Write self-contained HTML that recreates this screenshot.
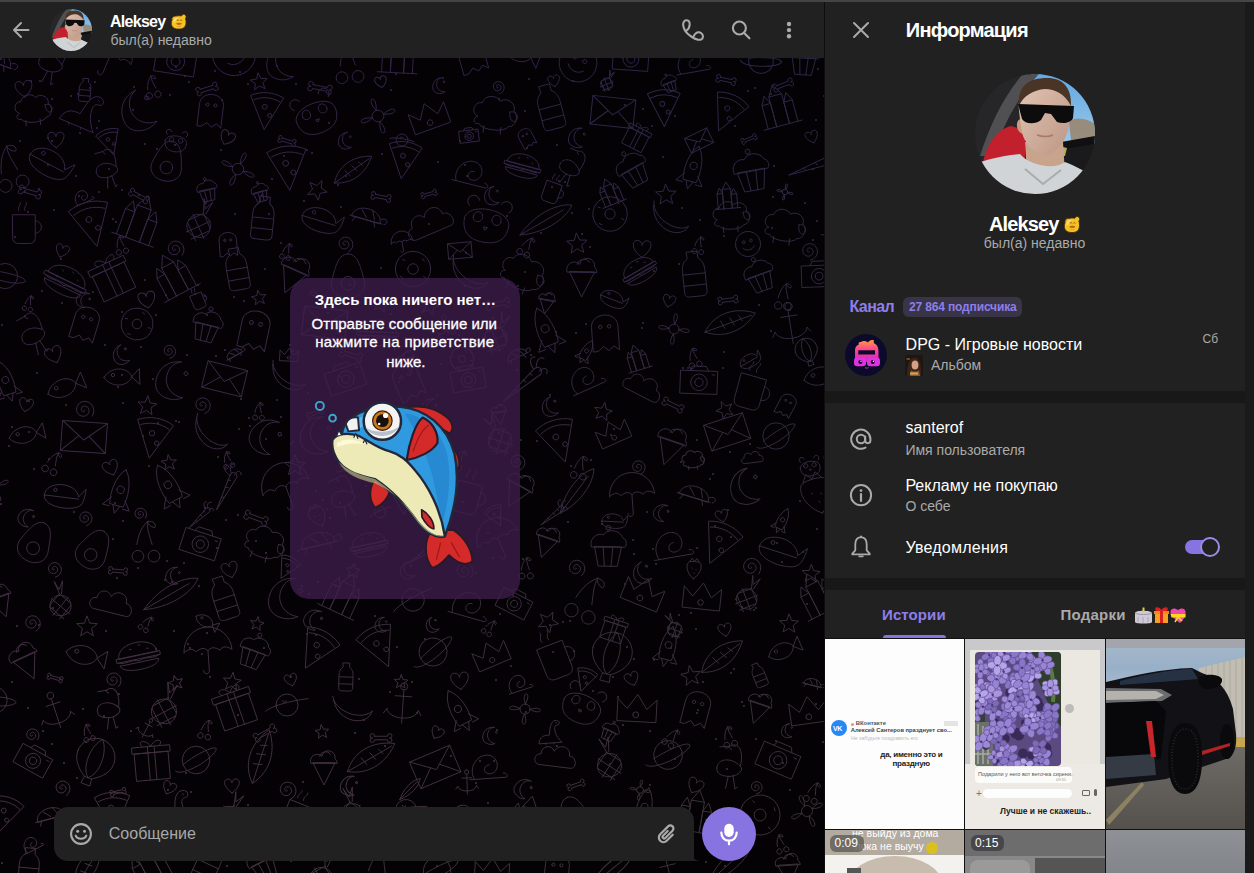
<!DOCTYPE html>
<html><head><meta charset="utf-8">
<style>
*{margin:0;padding:0;box-sizing:border-box}
html,body{width:1254px;height:873px;overflow:hidden;background:#181818;font-family:"Liberation Sans",sans-serif;color:#fff}
.abs{position:absolute}
.t{position:absolute;white-space:nowrap;line-height:1}
#topline{left:0;top:0;width:1254px;height:2px;background:#454545}
#chat{left:0;top:58px;width:824px;height:815px;background:#040205;overflow:hidden}
#chathdr{left:0;top:2px;width:824px;height:56px;background:#212121}
#vline{left:824px;top:2px;width:1px;height:871px;background:#0e0e0e}
#panel{left:825px;top:2px;width:420px;height:871px;background:#212121;overflow:hidden}
#strip{left:1245px;top:2px;width:9px;height:871px;background:#1a1a1a}
.sep{position:absolute;left:825px;width:420px;height:12px;background:#181818}
.grey{color:#aaaaaa}
.purple{color:#8d7eea}
svg{position:absolute;overflow:visible}
</style></head><body>
<svg width="0" height="0" style="position:absolute;left:0;top:0">
<defs>
<clipPath id="avc"><circle cx="60" cy="60" r="60"/></clipPath>
<linearGradient id="sky" x1="0" y1="0" x2="0" y2="1"><stop offset="0" stop-color="#62a8e2"/><stop offset="1" stop-color="#9ac8ea"/></linearGradient>
<linearGradient id="skin" x1="0" y1="0" x2="1" y2="1"><stop offset="0" stop-color="#e2c4b4"/><stop offset="1" stop-color="#bc9684"/></linearGradient>
<symbol id="avatar" viewBox="0 0 120 120">
<g clip-path="url(#avc)">
<rect width="120" height="120" fill="#262628"/>
<path d="M56 0H120V70H85Z" fill="url(#sky)"/>
<path d="M94 48C100 42 112 44 120 50V66H96Z" fill="#9a8468" opacity=".85"/>
<path d="M48 0H64C45 20 28 50 18 82L5 82C15 50 30 20 48 0Z" fill="#505052"/>
<path d="M8 88C12 70 22 55 36 52L50 56L50 92Z" fill="#c2202c"/>
<path d="M86 68L120 62V70L88 76Z" fill="#101012"/>
<path d="M86 76L120 70V105L88 105Z" fill="#1a1a1c"/>
<path d="M84 72L92 74L90 82L84 82Z" fill="#b8a860"/>
<path d="M50 68L88 68L90 100L52 100Z" fill="#c9a48c"/>
<path d="M47 45C40 44 40 58 48 60Z" fill="#c89a80"/>
<path d="M44 36C42 20 52 10 70 10C88 10 96 20 95 40C94 58 90 74 72 81C60 80 52 72 48 62C46 55 45 46 44 36Z" fill="url(#skin)"/>
<path d="M44 32C42 12 54 4 72 4C88 4 97 14 96 32C90 20 80 15 70 15C58 16 48 22 44 32Z" fill="#4a3426"/>
<path d="M43 30L99 32L98 44C96 49 88 50 82 48L76 40L70 39L66 46C60 51 50 50 47 45Z" fill="#0c0c0c"/>
<path d="M62 61C67 63 74 63 78 61" stroke="#a87a68" stroke-width="1.5" fill="none"/>
<path d="M0 120V90C10 86 25 82 45 80C55 92 80 96 90 88C100 92 112 98 120 104V120Z" fill="#d0d4d6"/>
<path d="M50 95L68 110L86 96" stroke="#a8acae" stroke-width="2" fill="none"/>
</g>
</symbol>
<symbol id="emo" viewBox="0 0 16 16">
<path d="M1.8 7C1.2 4.5 3 2.8 5.200 3C7 2.600 9 2.500 10.600 2.800C11 1.200 13.200 .800 14.200 2.100C15.100 3.200 14.800 4.700 14.100 5.500C14.900 7.600 15 10.200 14 12.600C13 15 10.500 15.600 8 15.600C5 15.600 2.700 14.800 1.700 12.600C.900 10.600 1 8.600 1.800 7Z" fill="#f3c226" stroke="#4a2800" stroke-width=".8"/>
<path d="M3 8C3.500 5 6 4 8 4.500C6 5.500 4.500 7 4.500 9.500Z" fill="#fde58a" opacity=".9"/>
<path d="M6.200 7.300C6.800 6.600 7.800 6.700 8 7.400M9.300 7.300C9.900 6.600 10.900 6.700 11.100 7.400" stroke="#8a4a08" stroke-width=".8" fill="none"/>
<path d="M5.500 10.200C6.500 9.200 10 9.200 11 10.200C10.500 12 6 12 5.500 10.200Z" fill="#c0661a"/>
<path d="M6.500 12.800C7.500 13.300 9 13.300 10 12.800" stroke="#d89030" stroke-width=".7" fill="none"/>
</symbol>
</defs></svg>
<div class="abs" id="topline"></div>
<div class="abs" id="chat"><svg style="left:0;top:0" width="824" height="815" viewBox="0 0 824 815"><defs><path id="d_anchor" vector-effect="non-scaling-stroke" d="M0-45A8 8 0 1 0 0-29A8 8 0 1 0 0-45M0-29V45M-18-15H18M-35 15C-30 40 30 40 35 15M-35 15L-42 25M35 15L42 25"/><path id="d_avocado" vector-effect="non-scaling-stroke" d="M0-45C20-45 25-20 32 5C40 30 22 45 0 45C-22 45-40 30-32 5C-25-20-20-45 0-45ZM-14 15A14 14 0 1 0 14 15A14 14 0 1 0-14 15"/><path id="d_balloon" vector-effect="non-scaling-stroke" d="M-40-10A40 40 0 1 1 40-10C40 15 15 30 8 35H-8C-15 30-40 15-40-10ZM-8 35L-10 50H10L8 35M0-50C-20-30-20 20 0 35M0-50C20-30 20 20 0 35"/><path id="d_banana" vector-effect="non-scaling-stroke" d="M-45-20C-35 30 35 40 45 0C30 20-25 15-45-20ZM-45-20L-48-30"/><path id="d_bird" vector-effect="non-scaling-stroke" d="M-30 5C-30-15 0-20 20 0C30 10 10 25-10 22C-25 20-30 15-30 5ZM20 0C25-25 20-45 5-45C-5-45-8-38 0-35M-5-42L-25-40M-5 22L-10 48M5 20L10 48M10 48L15 45"/><path id="d_bone" vector-effect="non-scaling-stroke" d="M-30-8H30A10 10 0 1 1 38 0A10 10 0 1 1 30 8H-30A10 10 0 1 1-38 0A10 10 0 1 1-30-8Z"/><path id="d_bottle" vector-effect="non-scaling-stroke" d="M-12-50H12V-35C25-25 25-15 25 0V40C25 48 20 50 12 50H-12C-20 50-25 48-25 40V0C-25-15-25-25-12-35ZM-25 0H25M-25 25H25"/><path id="d_burger" vector-effect="non-scaling-stroke" d="M-40 0C-40-35 40-35 40 0ZM-45 0H45V8H-45ZM-42 8C-30 15-15 5 0 12C15 5 30 15 42 8M-40 15H40C40 35-40 35-40 15ZM-15-15L-12-14M5-20L8-19M20-10L23-9"/><path id="d_camera" vector-effect="non-scaling-stroke" d="M-40-20H40V30H-40ZM-20-20L-15-30H15L20-20M-18 5A18 18 0 1 0 18 5A18 18 0 1 0-18 5M-9 5A9 9 0 1 0 9 5A9 9 0 1 0-9 5M28-12H34"/><path id="d_carrot" vector-effect="non-scaling-stroke" d="M-45 40L25-20C35-28 45-18 38-8ZM-20 18L-14 22M0 0L6 5M15-12L20-8M30-22C32-40 40-45 48-40M35-15C50-25 55-15 50-8M25-20C15-35 20-48 30-45"/><path id="d_castle" vector-effect="non-scaling-stroke" d="M-35 45V-10H-15V45M-15 45V-25H15V45M15 45V-5H35V45M-35-10L-25-30L-15-10M-15-25L0-50L15-25M15-5L25-25L35-5M-45 45H45"/><path id="d_cherry" vector-effect="non-scaling-stroke" d="M-20 20A14 14 0 1 0-19 20M18 25A14 14 0 1 0 19 25M-18 6C-10-20 0-35 15-45M18 11C15-10 10-30 15-45M15-45C30-45 35-35 30-28C20-30 15-38 15-45"/><path id="d_cloud" vector-effect="non-scaling-stroke" d="M-40 20C-55 20-55-5-38-5C-40-25-15-30-8-15C0-35 30-30 28-8C45-10 50 20 35 20Z"/><path id="d_crown" vector-effect="non-scaling-stroke" d="M-40 25V-20L-20 0L0-30L20 0L40-20V25ZM-8 12A6 6 0 1 0 4 12A6 6 0 1 0-8 12"/><path id="d_cupcake" vector-effect="non-scaling-stroke" d="M-28 0L-20 40H20L28 0ZM-35 0C-40-20-20-30-10-25C0-40 25-35 30-20C42-15 38 0 35 0ZM0-35A5 5 0 1 0 0-45A5 5 0 1 0 0-35M-10 0L-7 40M10 0L7 40"/><path id="d_dino" vector-effect="non-scaling-stroke" d="M-40 40C-35 15-20 10 0 12C5-10 5-30 20-40C35-45 45-35 38-25C30-22 25-25 22-15C20 5 30 25 45 40ZM28-33L30-32M-15 40V45M15 40V45"/><path id="d_donut" vector-effect="non-scaling-stroke" d="M-40 0A40 40 0 1 0 40 0A40 40 0 1 0-40 0M-12 0A12 12 0 1 0 12 0A12 12 0 1 0-12 0M-25-20L-20-18M20-25L24-20M25 15L30 18M-28 18L-22 22"/><path id="d_envelope" vector-effect="non-scaling-stroke" d="M-45-28H45V32H-45ZM-45-28L0 8L45-28M-45 32L-10 0M45 32L10 0"/><path id="d_face" vector-effect="non-scaling-stroke" d="M-45 0A45 45 0 1 0 45 0A45 45 0 1 0-45 0M-18-10A5 5 0 1 0-8-10A5 5 0 1 0-18-10M8-10A5 5 0 1 0 18-10A5 5 0 1 0 8-10M-20 12C-10 25 10 25 20 12"/><path id="d_feather" vector-effect="non-scaling-stroke" d="M-45 45C-30 0 10-40 45-45C40-10 0 30-45 45ZM-45 45L30-30"/><path id="d_feather2" vector-effect="non-scaling-stroke" d="M-40 40C-40 0-10-35 40-42C35-5 10 35-40 40ZM-40 40L35-35M-20 5L-5 15M-5-10L10 0M10-22L22-15"/><path id="d_fish" vector-effect="non-scaling-stroke" d="M-35 0C-20-25 20-25 30 0C20 25-20 25-35 0ZM30 0L48-18V18ZM-18-5A4 4 0 1 0-10-5A4 4 0 1 0-18-5"/><path id="d_flower" vector-effect="non-scaling-stroke" d="M0-12A12 12 0 1 0 0 12A12 12 0 1 0 0-12ZM0-12C-15-45 15-45 0-12M12 0C45-15 45 15 12 0M0 12C15 45-15 45 0 12M-12 0C-45 15-45-15-12 0"/><path id="d_ghost" vector-effect="non-scaling-stroke" d="M-30 45V-10C-30-45 30-45 30-10V45L18 35L6 45L-6 35L-18 45ZM-14-10A4 4 0 1 0-6-10A4 4 0 1 0-14-10M6-10A4 4 0 1 0 14-10A4 4 0 1 0 6-10"/><path id="d_gift" vector-effect="non-scaling-stroke" d="M-40-20H40V45H-40ZM-45-35H45V-20H-45ZM-8-35V45M8-35V45M0-35C-10-55-35-50-20-35M0-35C10-55 35-50 20-35"/><path id="d_heart" vector-effect="non-scaling-stroke" d="M0 35C-45 5-45-35-20-35C-8-35 0-25 0-15C0-25 8-35 20-35C45-35 45 5 0 35Z"/><path id="d_icecream" vector-effect="non-scaling-stroke" d="M-25 0L0 50L25 0ZM-30 0A15 15 0 0 1-5-15A15 15 0 0 1 25-10A14 14 0 0 1 30 0ZM-10-15A14 14 0 0 1 15-20"/><path id="d_moon" vector-effect="non-scaling-stroke" d="M10-45C-25-45-45-15-40 15C-35 40 0 50 25 35C0 35-20 15-18-10C-15-35 0-42 10-45ZM20-20L25-15L30-20L25-25Z"/><path id="d_mug" vector-effect="non-scaling-stroke" d="M-30-25H25V30C25 40 20 45 10 45H-15C-25 45-30 40-30 30ZM25-10C45-10 45 20 25 20M-15-35C-20-45-8-48-12-55M0-35C-5-45 7-48 3-55"/><path id="d_panda" vector-effect="non-scaling-stroke" d="M-45 5C-45-30 45-30 45 5C45 35 25 45 0 45C-25 45-45 35-45 5ZM-40-22A12 12 0 1 1-22-36M22-36A12 12 0 1 1 40-22M-28 0C-30-15-12-18-10-5C-8 8-26 12-28 0ZM28 0C30-15 12-18 10-5C8 8 26 12 28 0ZM-4 15H4L0 20Z"/><path id="d_pineapple" vector-effect="non-scaling-stroke" d="M-25 15C-25-20 25-20 25 15C25 45-25 45-25 15ZM-20-5L20 35M-25 15L5 45M0-15L25 10M20-5L-20 35M25 15L-5 45M0-15L-25 10M0-15L-10-45L0-25L10-45L5-15"/><path id="d_pizza" vector-effect="non-scaling-stroke" d="M-40-35C-15-48 15-48 40-35L0 45ZM-32-25C-10-35 10-35 32-25M-10-10A6 6 0 1 0 2-10A6 6 0 1 0-10-10M5 10A5 5 0 1 0 15 10A5 5 0 1 0 5 10"/><path id="d_planet" vector-effect="non-scaling-stroke" d="M-30 0A30 30 0 1 0 30 0A30 30 0 1 0-30 0M-50 8C-40 25 40 10 50-8C45-20-20-5-30 0"/><path id="d_rocket" vector-effect="non-scaling-stroke" d="M0-50C20-30 20 10 15 30H-15C-20 10-20-30 0-50ZM-15 15L-30 35H-15M15 15L30 35H15M-8-5A8 8 0 1 0 8-5A8 8 0 1 0-8-5M-8 30L0 48L8 30"/><path id="d_saturn2" vector-effect="non-scaling-stroke" d="M-25 0A25 25 0 1 0 25 0A25 25 0 1 0-25 0M-48 15C-35 0 35-15 48-15M-10-10A4 4 0 1 0-2-10"/><path id="d_sheep" vector-effect="non-scaling-stroke" d="M-35 10C-50 5-45-20-28-18C-25-35 0-38 8-25C20-35 42-25 38-8C50 0 45 25 30 25C25 38-25 38-30 25C-42 28-45 15-35 10ZM30-5C40-10 50 0 45 10C40 18 30 12 30-5ZM-20 28V42M15 28V42"/><path id="d_snail" vector-effect="non-scaling-stroke" d="M-40 30H40C45 30 45 20 35 20M-30 30C-45 0-15-30 10-20C30-10 25 20 5 20C-10 20-10 0 5 0"/><path id="d_spiral" vector-effect="non-scaling-stroke" d="M0 0 L1.0 0.4 L1.7 1.4 L1.6 2.9 L0.7 4.3 L-1.0 5.4 L-3.3 5.7 L-5.9 4.9 L-8.3 2.9 L-9.9 -0.1 L-10.3 -3.9 L-9.2 -7.9 L-6.5 -11.5 L-2.3 -14.1 L2.9 -15.1 L8.4 -14.2 L13.6 -11.1 L17.7 -6.1 L19.8 0.3 L19.5 7.5 L16.6 14.5 L11.2 20.2 L3.7 23.9 L-4.9 24.8 L-13.7 22.6 L-21.5 17.2 L-27.1 9.1 L-29.7 -0.7 L-28.7 -11.3 L-23.9 -21.2 L-15.7 -29.0 L-4.9 -33.7 L7.1 -34.5 L19.1 -30.9 L29.4 -23.1 L36.6 -12.0 L39.6 1.3 L37.7 15.2 L31.0 28.0 L20.1 37.9"/><path id="d_star" vector-effect="non-scaling-stroke" d="M0.0 -45.0 L11.8 -16.2 L42.8 -13.9 L19.0 6.2 L26.5 36.4 L0.0 20.0 L-26.5 36.4 L-19.0 6.2 L-42.8 -13.9 L-11.8 -16.2Z"/><path id="d_strawberry" vector-effect="non-scaling-stroke" d="M0 45C-35 20-35-20-20-25C-10-28 10-28 20-25C35-20 35 20 0 45ZM-20-25L-10-40L0-28L10-40L20-25M-10 0L-8 2M8 5L10 7M0 20L2 22"/><path id="d_turtle" vector-effect="non-scaling-stroke" d="M-40 10C-40-25 30-25 30 10ZM-45 10H35M30 0C45-10 50 5 40 10M-30 10L-35 22M15 10L20 22M-20-10L-5 5M5-15L15 5"/><path id="d_umbrella" vector-effect="non-scaling-stroke" d="M-50 0A50 50 0 0 1 50 0C40-8 30-8 25 0C15-8 5-8 0 0C-5-8-15-8-25 0C-30-8-40-8-50 0ZM0 0V40C0 50-12 50-12 40"/><path id="d_whale" vector-effect="non-scaling-stroke" d="M-45 10C-45-25 25-30 35 5C40 0 45-10 50-15C50 0 48 20 40 25C25 40-45 40-45 10ZM-45 10H35M-25-5A4 4 0 1 0-17-5A4 4 0 1 0-25-5"/></defs><g fill="none" stroke-width="1" stroke-linecap="round" stroke-linejoin="round"><use href="#d_turtle" transform="translate(-1 1) rotate(21) scale(0.45)" stroke="#36224a"/><use href="#d_bird" transform="translate(53 4) rotate(18) scale(0.46)" stroke="#35224a"/><use href="#d_umbrella" transform="translate(110 -2) rotate(23) scale(0.45)" stroke="#34224a"/><use href="#d_camera" transform="translate(176 1) rotate(9) scale(0.50)" stroke="#33234a"/><use href="#d_face" transform="translate(234 -4) rotate(-26) scale(0.48)" stroke="#332349"/><use href="#d_moon" transform="translate(283 5) rotate(-2) scale(0.40)" stroke="#322349"/><use href="#d_cherry" transform="translate(347 4) rotate(-12) scale(0.42)" stroke="#312449"/><use href="#d_castle" transform="translate(398 -5) rotate(3) scale(0.44)" stroke="#302449"/><use href="#d_ghost" transform="translate(471 -5) rotate(-16) scale(0.43)" stroke="#2f2449"/><use href="#d_fish" transform="translate(519 -5) rotate(21) scale(0.44)" stroke="#2e2449"/><use href="#d_face" transform="translate(578 5) rotate(26) scale(0.42)" stroke="#2e2548"/><use href="#d_camera" transform="translate(631 -1) rotate(4) scale(0.44)" stroke="#2d2549"/><use href="#d_snail" transform="translate(691 2) rotate(-10) scale(0.41)" stroke="#2c2548"/><use href="#d_planet" transform="translate(761 3) rotate(12) scale(0.41)" stroke="#2b2648"/><use href="#d_cupcake" transform="translate(804 -0) rotate(4) scale(0.42)" stroke="#2a2648"/><use href="#d_sheep" transform="translate(33 50) rotate(-5) scale(0.41)" stroke="#372349"/><use href="#d_dino" transform="translate(82 51) rotate(23) scale(0.43)" stroke="#362349"/><use href="#d_moon" transform="translate(140 53) rotate(-24) scale(0.46)" stroke="#352449"/><use href="#d_ghost" transform="translate(211 51) rotate(7) scale(0.40)" stroke="#342449"/><use href="#d_pizza" transform="translate(266 53) rotate(5) scale(0.41)" stroke="#332448"/><use href="#d_panda" transform="translate(315 55) rotate(-22) scale(0.46)" stroke="#332548"/><use href="#d_flower" transform="translate(378 58) rotate(-19) scale(0.49)" stroke="#322548"/><use href="#d_crown" transform="translate(429 59) rotate(-20) scale(0.47)" stroke="#312548"/><use href="#d_sheep" transform="translate(495 55) rotate(6) scale(0.49)" stroke="#302548"/><use href="#d_bottle" transform="translate(550 49) rotate(-15) scale(0.45)" stroke="#2f2548"/><use href="#d_envelope" transform="translate(613 53) rotate(6) scale(0.48)" stroke="#2e2647"/><use href="#d_pizza" transform="translate(664 50) rotate(-1) scale(0.41)" stroke="#2d2647"/><use href="#d_pizza" transform="translate(727 55) rotate(25) scale(0.43)" stroke="#2d2647"/><use href="#d_castle" transform="translate(778 48) rotate(-15) scale(0.44)" stroke="#2c2747"/><use href="#d_cherry" transform="translate(834 51) rotate(-22) scale(0.46)" stroke="#2b2747"/><use href="#d_cherry" transform="translate(8 110) rotate(-22) scale(0.46)" stroke="#382449"/><use href="#d_whale" transform="translate(51 102) rotate(28) scale(0.47)" stroke="#372449"/><use href="#d_bird" transform="translate(108 110) rotate(-11) scale(0.41)" stroke="#372548"/><use href="#d_avocado" transform="translate(168 103) rotate(14) scale(0.45)" stroke="#362548"/><use href="#d_flower" transform="translate(238 111) rotate(25) scale(0.48)" stroke="#352548"/><use href="#d_pizza" transform="translate(288 110) rotate(-5) scale(0.49)" stroke="#342547"/><use href="#d_feather2" transform="translate(353 112) rotate(10) scale(0.40)" stroke="#332647"/><use href="#d_pizza" transform="translate(404 102) rotate(8) scale(0.41)" stroke="#322647"/><use href="#d_snail" transform="translate(472 113) rotate(14) scale(0.44)" stroke="#312647"/><use href="#d_burger" transform="translate(523 107) rotate(15) scale(0.41)" stroke="#312647"/><use href="#d_bird" transform="translate(572 109) rotate(27) scale(0.40)" stroke="#302746"/><use href="#d_cupcake" transform="translate(632 111) rotate(-29) scale(0.43)" stroke="#2f2746"/><use href="#d_rocket" transform="translate(693 110) rotate(15) scale(0.45)" stroke="#2e2746"/><use href="#d_cupcake" transform="translate(751 113) rotate(-10) scale(0.49)" stroke="#2e2746"/><use href="#d_carrot" transform="translate(815 104) rotate(15) scale(0.48)" stroke="#2c2745"/><use href="#d_mug" transform="translate(25 167) rotate(-0) scale(0.41)" stroke="#392548"/><use href="#d_pizza" transform="translate(92 166) rotate(-13) scale(0.50)" stroke="#382648"/><use href="#d_castle" transform="translate(140 161) rotate(20) scale(0.49)" stroke="#372647"/><use href="#d_pineapple" transform="translate(201 162) rotate(21) scale(0.47)" stroke="#362647"/><use href="#d_bottle" transform="translate(263 160) rotate(6) scale(0.43)" stroke="#352647"/><use href="#d_whale" transform="translate(322 159) rotate(17) scale(0.43)" stroke="#352646"/><use href="#d_turtle" transform="translate(369 158) rotate(16) scale(0.42)" stroke="#342746"/><use href="#d_cloud" transform="translate(431 165) rotate(-23) scale(0.50)" stroke="#332746"/><use href="#d_panda" transform="translate(487 162) rotate(11) scale(0.50)" stroke="#322746"/><use href="#d_feather" transform="translate(546 162) rotate(15) scale(0.47)" stroke="#312745"/><use href="#d_donut" transform="translate(610 156) rotate(-9) scale(0.43)" stroke="#302745"/><use href="#d_banana" transform="translate(670 162) rotate(18) scale(0.44)" stroke="#302845"/><use href="#d_sheep" transform="translate(731 157) rotate(-3) scale(0.41)" stroke="#2f2845"/><use href="#d_sheep" transform="translate(785 167) rotate(9) scale(0.46)" stroke="#2e2844"/><use href="#d_snail" transform="translate(841 166) rotate(9) scale(0.45)" stroke="#2d2944"/><use href="#d_planet" transform="translate(5 218) rotate(24) scale(0.42)" stroke="#3a2647"/><use href="#d_burger" transform="translate(66 222) rotate(26) scale(0.50)" stroke="#392747"/><use href="#d_gift" transform="translate(112 219) rotate(-25) scale(0.43)" stroke="#392747"/><use href="#d_castle" transform="translate(173 217) rotate(-28) scale(0.45)" stroke="#382746"/><use href="#d_bottle" transform="translate(237 211) rotate(-10) scale(0.42)" stroke="#372746"/><use href="#d_icecream" transform="translate(295 212) rotate(24) scale(0.50)" stroke="#362746"/><use href="#d_avocado" transform="translate(348 218) rotate(-0) scale(0.49)" stroke="#352845"/><use href="#d_donut" transform="translate(413 211) rotate(4) scale(0.44)" stroke="#342845"/><use href="#d_banana" transform="translate(469 217) rotate(21) scale(0.45)" stroke="#342845"/><use href="#d_sheep" transform="translate(523 214) rotate(22) scale(0.50)" stroke="#332844"/><use href="#d_icecream" transform="translate(582 214) rotate(1) scale(0.50)" stroke="#322844"/><use href="#d_burger" transform="translate(639 212) rotate(-30) scale(0.41)" stroke="#312844"/><use href="#d_bottle" transform="translate(694 216) rotate(-6) scale(0.45)" stroke="#312943"/><use href="#d_cupcake" transform="translate(759 217) rotate(-20) scale(0.41)" stroke="#302943"/><use href="#d_camera" transform="translate(819 216) rotate(-2) scale(0.43)" stroke="#2f2943"/><use href="#d_bird" transform="translate(34 275) rotate(-23) scale(0.45)" stroke="#3b2846"/><use href="#d_ghost" transform="translate(86 264) rotate(17) scale(0.41)" stroke="#3a2746"/><use href="#d_donut" transform="translate(137 266) rotate(-13) scale(0.40)" stroke="#392846"/><use href="#d_cupcake" transform="translate(207 267) rotate(14) scale(0.41)" stroke="#382845"/><use href="#d_ghost" transform="translate(255 270) rotate(12) scale(0.47)" stroke="#382845"/><use href="#d_envelope" transform="translate(325 264) rotate(7) scale(0.48)" stroke="#372845"/><use href="#d_burger" transform="translate(378 274) rotate(2) scale(0.46)" stroke="#362944"/><use href="#d_flower" transform="translate(441 271) rotate(14) scale(0.42)" stroke="#352944"/><use href="#d_pineapple" transform="translate(498 275) rotate(23) scale(0.46)" stroke="#352943"/><use href="#d_rocket" transform="translate(546 273) rotate(-22) scale(0.49)" stroke="#342943"/><use href="#d_ghost" transform="translate(605 273) rotate(-4) scale(0.44)" stroke="#332943"/><use href="#d_flower" transform="translate(674 271) rotate(8) scale(0.42)" stroke="#322942"/><use href="#d_feather2" transform="translate(730 265) rotate(25) scale(0.47)" stroke="#312a42"/><use href="#d_anchor" transform="translate(790 265) rotate(-9) scale(0.46)" stroke="#302a42"/><use href="#d_pizza" transform="translate(849 274) rotate(-29) scale(0.45)" stroke="#302a41"/><use href="#d_rocket" transform="translate(6 324) rotate(-18) scale(0.42)" stroke="#3c2846"/><use href="#d_fish" transform="translate(63 330) rotate(-22) scale(0.46)" stroke="#3c2945"/><use href="#d_fish" transform="translate(119 319) rotate(-2) scale(0.43)" stroke="#3b2945"/><use href="#d_moon" transform="translate(174 323) rotate(8) scale(0.44)" stroke="#3a2945"/><use href="#d_envelope" transform="translate(225 320) rotate(14) scale(0.45)" stroke="#392944"/><use href="#d_banana" transform="translate(288 320) rotate(18) scale(0.41)" stroke="#382944"/><use href="#d_camera" transform="translate(345 319) rotate(-19) scale(0.46)" stroke="#382944"/><use href="#d_ghost" transform="translate(407 322) rotate(-23) scale(0.43)" stroke="#372a43"/><use href="#d_camera" transform="translate(468 320) rotate(-10) scale(0.41)" stroke="#362a43"/><use href="#d_carrot" transform="translate(523 322) rotate(-6) scale(0.48)" stroke="#352a42"/><use href="#d_snail" transform="translate(584 319) rotate(-24) scale(0.43)" stroke="#342a42"/><use href="#d_cloud" transform="translate(644 330) rotate(27) scale(0.42)" stroke="#342a41"/><use href="#d_camera" transform="translate(699 322) rotate(2) scale(0.46)" stroke="#332a41"/><use href="#d_mug" transform="translate(752 330) rotate(16) scale(0.47)" stroke="#322b40"/><use href="#d_fish" transform="translate(820 318) rotate(-15) scale(0.47)" stroke="#312b40"/><use href="#d_fish" transform="translate(24 377) rotate(-13) scale(0.43)" stroke="#3d2945"/><use href="#d_envelope" transform="translate(84 378) rotate(4) scale(0.50)" stroke="#3c2a45"/><use href="#d_pizza" transform="translate(153 380) rotate(10) scale(0.45)" stroke="#3b2a44"/><use href="#d_banana" transform="translate(210 377) rotate(28) scale(0.44)" stroke="#3b2a44"/><use href="#d_moon" transform="translate(267 379) rotate(27) scale(0.41)" stroke="#3a2a43"/><use href="#d_moon" transform="translate(318 378) rotate(2) scale(0.43)" stroke="#392a43"/><use href="#d_strawberry" transform="translate(377 375) rotate(15) scale(0.47)" stroke="#382a42"/><use href="#d_dino" transform="translate(427 381) rotate(-21) scale(0.40)" stroke="#382b42"/><use href="#d_pineapple" transform="translate(497 377) rotate(-27) scale(0.47)" stroke="#372b41"/><use href="#d_pizza" transform="translate(559 383) rotate(-17) scale(0.48)" stroke="#362b41"/><use href="#d_crown" transform="translate(613 375) rotate(-24) scale(0.40)" stroke="#352b40"/><use href="#d_icecream" transform="translate(672 383) rotate(19) scale(0.50)" stroke="#342b40"/><use href="#d_envelope" transform="translate(727 373) rotate(-18) scale(0.45)" stroke="#342b40"/><use href="#d_planet" transform="translate(776 378) rotate(-22) scale(0.44)" stroke="#332b3f"/><use href="#d_dino" transform="translate(840 379) rotate(-8) scale(0.47)" stroke="#322c3f"/><use href="#d_flower" transform="translate(-6 429) rotate(-23) scale(0.42)" stroke="#3f2a45"/><use href="#d_whale" transform="translate(64 435) rotate(7) scale(0.43)" stroke="#3e2b44"/><use href="#d_rocket" transform="translate(120 434) rotate(15) scale(0.46)" stroke="#3d2b44"/><use href="#d_rocket" transform="translate(169 429) rotate(-28) scale(0.49)" stroke="#3c2b43"/><use href="#d_carrot" transform="translate(225 429) rotate(-28) scale(0.40)" stroke="#3b2b43"/><use href="#d_umbrella" transform="translate(286 429) rotate(-20) scale(0.49)" stroke="#3b2b42"/><use href="#d_bird" transform="translate(344 438) rotate(-17) scale(0.45)" stroke="#3a2b42"/><use href="#d_pizza" transform="translate(403 435) rotate(-3) scale(0.48)" stroke="#392b41"/><use href="#d_mug" transform="translate(469 436) rotate(15) scale(0.44)" stroke="#382c40"/><use href="#d_icecream" transform="translate(520 428) rotate(29) scale(0.47)" stroke="#372c40"/><use href="#d_feather" transform="translate(577 433) rotate(-8) scale(0.44)" stroke="#372c40"/><use href="#d_umbrella" transform="translate(632 437) rotate(-4) scale(0.45)" stroke="#362c3f"/><use href="#d_turtle" transform="translate(697 436) rotate(17) scale(0.43)" stroke="#352c3e"/><use href="#d_moon" transform="translate(747 429) rotate(-12) scale(0.41)" stroke="#342c3e"/><use href="#d_strawberry" transform="translate(816 434) rotate(-17) scale(0.49)" stroke="#342c3d"/><use href="#d_avocado" transform="translate(36 484) rotate(25) scale(0.46)" stroke="#3f2c44"/><use href="#d_avocado" transform="translate(94 491) rotate(30) scale(0.45)" stroke="#3e2c43"/><use href="#d_cherry" transform="translate(144 483) rotate(-8) scale(0.42)" stroke="#3e2c43"/><use href="#d_camera" transform="translate(201 484) rotate(18) scale(0.46)" stroke="#3d2c42"/><use href="#d_sheep" transform="translate(265 484) rotate(20) scale(0.45)" stroke="#3c2c42"/><use href="#d_turtle" transform="translate(320 482) rotate(-13) scale(0.49)" stroke="#3b2c41"/><use href="#d_burger" transform="translate(369 486) rotate(-12) scale(0.42)" stroke="#3b2c40"/><use href="#d_carrot" transform="translate(427 490) rotate(3) scale(0.41)" stroke="#3a2c40"/><use href="#d_umbrella" transform="translate(498 481) rotate(-24) scale(0.43)" stroke="#392c3f"/><use href="#d_icecream" transform="translate(548 480) rotate(19) scale(0.41)" stroke="#382d3f"/><use href="#d_cupcake" transform="translate(608 489) rotate(1) scale(0.48)" stroke="#382d3e"/><use href="#d_snail" transform="translate(671 485) rotate(-10) scale(0.48)" stroke="#372d3e"/><use href="#d_pizza" transform="translate(719 486) rotate(25) scale(0.47)" stroke="#362d3d"/><use href="#d_whale" transform="translate(782 490) rotate(18) scale(0.49)" stroke="#352d3c"/><use href="#d_burger" transform="translate(846 491) rotate(1) scale(0.46)" stroke="#352d3c"/><use href="#d_icecream" transform="translate(-1 539) rotate(-20) scale(0.42)" stroke="#412d43"/><use href="#d_pineapple" transform="translate(60 542) rotate(-5) scale(0.42)" stroke="#402d43"/><use href="#d_cloud" transform="translate(113 546) rotate(14) scale(0.45)" stroke="#3f2d42"/><use href="#d_feather" transform="translate(171 536) rotate(15) scale(0.49)" stroke="#3e2d42"/><use href="#d_bottle" transform="translate(224 540) rotate(-18) scale(0.43)" stroke="#3e2d41"/><use href="#d_moon" transform="translate(288 541) rotate(6) scale(0.47)" stroke="#3d2d40"/><use href="#d_castle" transform="translate(344 536) rotate(25) scale(0.44)" stroke="#3c2d40"/><use href="#d_saturn2" transform="translate(413 542) rotate(-14) scale(0.45)" stroke="#3b2d3f"/><use href="#d_snail" transform="translate(470 545) rotate(16) scale(0.47)" stroke="#3b2d3e"/><use href="#d_camera" transform="translate(515 544) rotate(27) scale(0.40)" stroke="#3a2e3e"/><use href="#d_cherry" transform="translate(585 539) rotate(16) scale(0.48)" stroke="#392e3d"/><use href="#d_crown" transform="translate(643 535) rotate(22) scale(0.49)" stroke="#382e3d"/><use href="#d_crown" transform="translate(702 539) rotate(6) scale(0.47)" stroke="#372e3c"/><use href="#d_pineapple" transform="translate(749 536) rotate(24) scale(0.41)" stroke="#372e3c"/><use href="#d_castle" transform="translate(817 536) rotate(-27) scale(0.45)" stroke="#362e3b"/><use href="#d_icecream" transform="translate(24 599) rotate(-25) scale(0.48)" stroke="#412e42"/><use href="#d_fish" transform="translate(83 597) rotate(12) scale(0.49)" stroke="#412e42"/><use href="#d_burger" transform="translate(138 597) rotate(-12) scale(0.49)" stroke="#402e41"/><use href="#d_umbrella" transform="translate(208 593) rotate(-4) scale(0.48)" stroke="#3f2e40"/><use href="#d_cupcake" transform="translate(254 593) rotate(20) scale(0.42)" stroke="#3e2e40"/><use href="#d_pizza" transform="translate(316 592) rotate(30) scale(0.46)" stroke="#3e2e3f"/><use href="#d_pizza" transform="translate(380 589) rotate(-24) scale(0.47)" stroke="#3d2e3f"/><use href="#d_planet" transform="translate(433 594) rotate(-29) scale(0.47)" stroke="#3c2e3e"/><use href="#d_crown" transform="translate(491 597) rotate(-23) scale(0.43)" stroke="#3b2e3d"/><use href="#d_mug" transform="translate(555 598) rotate(-21) scale(0.49)" stroke="#3b2e3c"/><use href="#d_balloon" transform="translate(611 599) rotate(15) scale(0.50)" stroke="#3a2f3c"/><use href="#d_rocket" transform="translate(668 589) rotate(14) scale(0.42)" stroke="#392e3b"/><use href="#d_feather2" transform="translate(722 599) rotate(8) scale(0.45)" stroke="#392f3a"/><use href="#d_fish" transform="translate(782 593) rotate(-24) scale(0.41)" stroke="#382f3a"/><use href="#d_feather" transform="translate(844 596) rotate(-28) scale(0.42)" stroke="#372f39"/><use href="#d_planet" transform="translate(-6 642) rotate(16) scale(0.44)" stroke="#432f42"/><use href="#d_anchor" transform="translate(55 652) rotate(-18) scale(0.41)" stroke="#422f41"/><use href="#d_bird" transform="translate(110 650) rotate(-5) scale(0.43)" stroke="#412f41"/><use href="#d_pineapple" transform="translate(166 647) rotate(17) scale(0.50)" stroke="#412f40"/><use href="#d_gift" transform="translate(235 649) rotate(-19) scale(0.43)" stroke="#402f3f"/><use href="#d_saturn2" transform="translate(287 647) rotate(1) scale(0.44)" stroke="#3f2f3f"/><use href="#d_banana" transform="translate(353 652) rotate(2) scale(0.43)" stroke="#3e2f3e"/><use href="#d_anchor" transform="translate(403 645) rotate(4) scale(0.45)" stroke="#3e2f3d"/><use href="#d_rocket" transform="translate(459 653) rotate(-28) scale(0.46)" stroke="#3d2f3c"/><use href="#d_flower" transform="translate(525 651) rotate(5) scale(0.42)" stroke="#3c2f3c"/><use href="#d_panda" transform="translate(583 646) rotate(23) scale(0.43)" stroke="#3b2f3b"/><use href="#d_crown" transform="translate(637 651) rotate(3) scale(0.49)" stroke="#3b2f3a"/><use href="#d_ghost" transform="translate(697 649) rotate(15) scale(0.42)" stroke="#3a2f3a"/><use href="#d_icecream" transform="translate(760 646) rotate(19) scale(0.41)" stroke="#392f39"/><use href="#d_crown" transform="translate(809 653) rotate(-8) scale(0.48)" stroke="#393038"/><use href="#d_camera" transform="translate(34 701) rotate(29) scale(0.42)" stroke="#433041"/><use href="#d_balloon" transform="translate(94 704) rotate(21) scale(0.48)" stroke="#433040"/><use href="#d_gift" transform="translate(152 703) rotate(-5) scale(0.42)" stroke="#42303f"/><use href="#d_planet" transform="translate(196 702) rotate(-20) scale(0.46)" stroke="#41303f"/><use href="#d_feather2" transform="translate(261 699) rotate(-27) scale(0.49)" stroke="#40303e"/><use href="#d_icecream" transform="translate(324 705) rotate(-0) scale(0.44)" stroke="#40303d"/><use href="#d_feather2" transform="translate(371 700) rotate(15) scale(0.48)" stroke="#3f303d"/><use href="#d_envelope" transform="translate(435 708) rotate(-23) scale(0.48)" stroke="#3e303c"/><use href="#d_snail" transform="translate(487 707) rotate(-4) scale(0.45)" stroke="#3e303b"/><use href="#d_cloud" transform="translate(557 700) rotate(7) scale(0.43)" stroke="#3d303a"/><use href="#d_pineapple" transform="translate(608 701) rotate(-12) scale(0.48)" stroke="#3c303a"/><use href="#d_planet" transform="translate(668 697) rotate(-15) scale(0.48)" stroke="#3b3039"/><use href="#d_bird" transform="translate(731 708) rotate(2) scale(0.47)" stroke="#3b3038"/><use href="#d_camera" transform="translate(779 700) rotate(23) scale(0.49)" stroke="#3a3037"/><use href="#d_panda" transform="translate(849 705) rotate(-5) scale(0.49)" stroke="#393036"/><use href="#d_pizza" transform="translate(4 757) rotate(18) scale(0.41)" stroke="#453141"/><use href="#d_turtle" transform="translate(52 756) rotate(-15) scale(0.40)" stroke="#443140"/><use href="#d_pizza" transform="translate(113 754) rotate(-3) scale(0.44)" stroke="#43313f"/><use href="#d_dino" transform="translate(174 752) rotate(-12) scale(0.42)" stroke="#43313e"/><use href="#d_pineapple" transform="translate(231 754) rotate(26) scale(0.45)" stroke="#42313e"/><use href="#d_mug" transform="translate(298 756) rotate(22) scale(0.42)" stroke="#41313d"/><use href="#d_pineapple" transform="translate(351 751) rotate(-9) scale(0.48)" stroke="#40313c"/><use href="#d_saturn2" transform="translate(406 752) rotate(8) scale(0.42)" stroke="#40313b"/><use href="#d_cloud" transform="translate(459 761) rotate(-12) scale(0.47)" stroke="#3f313a"/><use href="#d_castle" transform="translate(527 762) rotate(13) scale(0.49)" stroke="#3e3139"/><use href="#d_avocado" transform="translate(574 758) rotate(-20) scale(0.44)" stroke="#3e3139"/><use href="#d_rocket" transform="translate(644 751) rotate(13) scale(0.43)" stroke="#3d3138"/><use href="#d_castle" transform="translate(696 754) rotate(10) scale(0.44)" stroke="#3c3137"/><use href="#d_donut" transform="translate(760 757) rotate(24) scale(0.50)" stroke="#3c3136"/><use href="#d_flower" transform="translate(807 753) rotate(-25) scale(0.46)" stroke="#3b3136"/><use href="#d_bottle" transform="translate(29 810) rotate(5) scale(0.40)" stroke="#463240"/><use href="#d_feather2" transform="translate(88 809) rotate(-13) scale(0.41)" stroke="#45323f"/><use href="#d_castle" transform="translate(149 807) rotate(-28) scale(0.47)" stroke="#44323e"/><use href="#d_bottle" transform="translate(208 806) rotate(25) scale(0.46)" stroke="#43323d"/><use href="#d_cupcake" transform="translate(262 804) rotate(-26) scale(0.41)" stroke="#43323c"/><use href="#d_pineapple" transform="translate(323 815) rotate(17) scale(0.47)" stroke="#42323b"/><use href="#d_cherry" transform="translate(377 810) rotate(2) scale(0.47)" stroke="#41323b"/><use href="#d_planet" transform="translate(437 813) rotate(-16) scale(0.46)" stroke="#41323a"/><use href="#d_crown" transform="translate(492 813) rotate(3) scale(0.43)" stroke="#403239"/><use href="#d_ghost" transform="translate(557 811) rotate(6) scale(0.40)" stroke="#3f3238"/><use href="#d_feather" transform="translate(612 811) rotate(6) scale(0.43)" stroke="#3e3237"/><use href="#d_anchor" transform="translate(669 814) rotate(-14) scale(0.44)" stroke="#3e3236"/><use href="#d_feather" transform="translate(730 805) rotate(3) scale(0.46)" stroke="#3d3236"/><use href="#d_icecream" transform="translate(788 807) rotate(-4) scale(0.41)" stroke="#3c3235"/><use href="#d_cherry" transform="translate(844 814) rotate(16) scale(0.48)" stroke="#3c3234"/><use href="#d_heart" transform="translate(24 31) rotate(-8) scale(0.23)" stroke="#36234a"/><use href="#d_bottle" transform="translate(85 32) rotate(5) scale(0.23)" stroke="#352349"/><use href="#d_cherry" transform="translate(151 29) rotate(-19) scale(0.23)" stroke="#342349"/><use href="#d_bone" transform="translate(207 31) rotate(-17) scale(0.22)" stroke="#342449"/><use href="#d_star" transform="translate(259 24) rotate(-6) scale(0.20)" stroke="#332449"/><use href="#d_bone" transform="translate(320 30) rotate(11) scale(0.24)" stroke="#322449"/><use href="#d_heart" transform="translate(381 24) rotate(-13) scale(0.16)" stroke="#312449"/><use href="#d_moon" transform="translate(440 28) rotate(-6) scale(0.18)" stroke="#302548"/><use href="#d_spiral" transform="translate(498 29) rotate(14) scale(0.16)" stroke="#2f2548"/><use href="#d_heart" transform="translate(554 23) rotate(-11) scale(0.16)" stroke="#2e2548"/><use href="#d_pineapple" transform="translate(608 23) rotate(23) scale(0.24)" stroke="#2e2548"/><use href="#d_cupcake" transform="translate(669 25) rotate(-21) scale(0.22)" stroke="#2d2648"/><use href="#d_bone" transform="translate(726 22) rotate(12) scale(0.20)" stroke="#2c2648"/><use href="#d_bone" transform="translate(783 27) rotate(-21) scale(0.21)" stroke="#2b2647"/><use href="#d_camera" transform="translate(837 25) rotate(1) scale(0.23)" stroke="#2a2647"/><use href="#d_heart" transform="translate(56 82) rotate(-1) scale(0.22)" stroke="#372449"/><use href="#d_pizza" transform="translate(110 84) rotate(-17) scale(0.29)" stroke="#362449"/><use href="#d_panda" transform="translate(176 83) rotate(8) scale(0.24)" stroke="#352448"/><use href="#d_heart" transform="translate(227 80) rotate(26) scale(0.20)" stroke="#342548"/><use href="#d_bone" transform="translate(287 83) rotate(16) scale(0.18)" stroke="#342548"/><use href="#d_moon" transform="translate(346 83) rotate(-5) scale(0.19)" stroke="#332548"/><use href="#d_saturn2" transform="translate(402 82) rotate(25) scale(0.24)" stroke="#322548"/><use href="#d_camera" transform="translate(469 77) rotate(-7) scale(0.24)" stroke="#312647"/><use href="#d_ghost" transform="translate(526 79) rotate(-28) scale(0.23)" stroke="#302647"/><use href="#d_moon" transform="translate(578 80) rotate(9) scale(0.23)" stroke="#2f2647"/><use href="#d_gift" transform="translate(637 79) rotate(27) scale(0.27)" stroke="#2e2647"/><use href="#d_envelope" transform="translate(699 82) rotate(-26) scale(0.27)" stroke="#2e2746"/><use href="#d_bone" transform="translate(749 81) rotate(-22) scale(0.16)" stroke="#2d2746"/><use href="#d_heart" transform="translate(812 79) rotate(-18) scale(0.17)" stroke="#2c2746"/><use href="#d_bone" transform="translate(30 134) rotate(16) scale(0.23)" stroke="#382548"/><use href="#d_snail" transform="translate(82 138) rotate(-24) scale(0.24)" stroke="#382548"/><use href="#d_bone" transform="translate(139 138) rotate(28) scale(0.21)" stroke="#372548"/><use href="#d_cupcake" transform="translate(207 132) rotate(-12) scale(0.28)" stroke="#362547"/><use href="#d_cupcake" transform="translate(260 134) rotate(-15) scale(0.24)" stroke="#352647"/><use href="#d_star" transform="translate(317 132) rotate(29) scale(0.23)" stroke="#342647"/><use href="#d_bone" transform="translate(381 139) rotate(11) scale(0.20)" stroke="#332647"/><use href="#d_bone" transform="translate(429 136) rotate(-15) scale(0.16)" stroke="#332646"/><use href="#d_moon" transform="translate(493 138) rotate(-8) scale(0.21)" stroke="#322746"/><use href="#d_mug" transform="translate(553 132) rotate(20) scale(0.29)" stroke="#312746"/><use href="#d_castle" transform="translate(610 134) rotate(-22) scale(0.28)" stroke="#302746"/><use href="#d_star" transform="translate(666 137) rotate(-2) scale(0.24)" stroke="#2f2745"/><use href="#d_castle" transform="translate(727 138) rotate(-5) scale(0.28)" stroke="#2e2845"/><use href="#d_flower" transform="translate(785 134) rotate(13) scale(0.22)" stroke="#2e2845"/><use href="#d_moon" transform="translate(836 130) rotate(18) scale(0.20)" stroke="#2d2845"/><use href="#d_heart" transform="translate(62 193) rotate(18) scale(0.18)" stroke="#392647"/><use href="#d_cherry" transform="translate(120 187) rotate(-21) scale(0.19)" stroke="#382647"/><use href="#d_spiral" transform="translate(175 191) rotate(-21) scale(0.22)" stroke="#372647"/><use href="#d_ghost" transform="translate(228 185) rotate(-4) scale(0.29)" stroke="#362647"/><use href="#d_cherry" transform="translate(286 193) rotate(8) scale(0.17)" stroke="#362746"/><use href="#d_spiral" transform="translate(345 186) rotate(4) scale(0.20)" stroke="#352746"/><use href="#d_umbrella" transform="translate(402 184) rotate(-10) scale(0.22)" stroke="#342746"/><use href="#d_envelope" transform="translate(460 192) rotate(-5) scale(0.26)" stroke="#332745"/><use href="#d_cherry" transform="translate(526 188) rotate(20) scale(0.21)" stroke="#322845"/><use href="#d_star" transform="translate(577 186) rotate(-3) scale(0.24)" stroke="#322845"/><use href="#d_heart" transform="translate(642 191) rotate(2) scale(0.24)" stroke="#312844"/><use href="#d_cherry" transform="translate(698 187) rotate(1) scale(0.18)" stroke="#302844"/><use href="#d_face" transform="translate(748 186) rotate(-14) scale(0.28)" stroke="#2f2844"/><use href="#d_spiral" transform="translate(809 193) rotate(20) scale(0.22)" stroke="#2e2943"/><use href="#d_cherry" transform="translate(28 245) rotate(5) scale(0.16)" stroke="#3a2747"/><use href="#d_moon" transform="translate(84 242) rotate(30) scale(0.18)" stroke="#3a2747"/><use href="#d_heart" transform="translate(147 242) rotate(-11) scale(0.23)" stroke="#392746"/><use href="#d_mug" transform="translate(198 241) rotate(-22) scale(0.22)" stroke="#382746"/><use href="#d_star" transform="translate(259 240) rotate(-9) scale(0.17)" stroke="#372846"/><use href="#d_bone" transform="translate(318 238) rotate(27) scale(0.17)" stroke="#362845"/><use href="#d_star" transform="translate(381 246) rotate(15) scale(0.19)" stroke="#362845"/><use href="#d_star" transform="translate(430 248) rotate(17) scale(0.20)" stroke="#352844"/><use href="#d_bone" transform="translate(498 246) rotate(-11) scale(0.24)" stroke="#342944"/><use href="#d_icecream" transform="translate(547 242) rotate(10) scale(0.28)" stroke="#332944"/><use href="#d_whale" transform="translate(614 239) rotate(21) scale(0.29)" stroke="#322943"/><use href="#d_heart" transform="translate(669 243) rotate(14) scale(0.17)" stroke="#322943"/><use href="#d_bone" transform="translate(728 242) rotate(-7) scale(0.20)" stroke="#312943"/><use href="#d_cherry" transform="translate(783 238) rotate(-3) scale(0.27)" stroke="#302942"/><use href="#d_icecream" transform="translate(842 244) rotate(-10) scale(0.26)" stroke="#2f2a42"/><use href="#d_heart" transform="translate(54 297) rotate(-22) scale(0.23)" stroke="#3b2846"/><use href="#d_moon" transform="translate(122 297) rotate(-21) scale(0.22)" stroke="#3a2846"/><use href="#d_spiral" transform="translate(169 293) rotate(22) scale(0.17)" stroke="#392845"/><use href="#d_turtle" transform="translate(235 295) rotate(-29) scale(0.24)" stroke="#392945"/><use href="#d_crown" transform="translate(289 297) rotate(3) scale(0.23)" stroke="#382944"/><use href="#d_bone" transform="translate(351 297) rotate(16) scale(0.23)" stroke="#372944"/><use href="#d_icecream" transform="translate(407 301) rotate(-19) scale(0.28)" stroke="#362943"/><use href="#d_donut" transform="translate(462 301) rotate(-23) scale(0.29)" stroke="#362943"/><use href="#d_turtle" transform="translate(518 296) rotate(-26) scale(0.29)" stroke="#352943"/><use href="#d_rocket" transform="translate(586 294) rotate(30) scale(0.26)" stroke="#342a42"/><use href="#d_castle" transform="translate(637 300) rotate(-17) scale(0.27)" stroke="#332a42"/><use href="#d_cherry" transform="translate(693 300) rotate(-22) scale(0.20)" stroke="#322a42"/><use href="#d_whale" transform="translate(749 301) rotate(-30) scale(0.24)" stroke="#322a41"/><use href="#d_balloon" transform="translate(807 294) rotate(-18) scale(0.28)" stroke="#312a41"/><use href="#d_heart" transform="translate(26 347) rotate(12) scale(0.19)" stroke="#3c2946"/><use href="#d_spiral" transform="translate(84 352) rotate(-25) scale(0.24)" stroke="#3c2945"/><use href="#d_star" transform="translate(147 348) rotate(6) scale(0.22)" stroke="#3b2945"/><use href="#d_spiral" transform="translate(202 347) rotate(10) scale(0.21)" stroke="#3a2944"/><use href="#d_cherry" transform="translate(258 353) rotate(-5) scale(0.18)" stroke="#392a44"/><use href="#d_bone" transform="translate(315 355) rotate(-24) scale(0.18)" stroke="#392a43"/><use href="#d_moon" transform="translate(382 354) rotate(24) scale(0.17)" stroke="#382a43"/><use href="#d_moon" transform="translate(430 350) rotate(12) scale(0.21)" stroke="#372a42"/><use href="#d_icecream" transform="translate(499 354) rotate(-8) scale(0.26)" stroke="#362a42"/><use href="#d_moon" transform="translate(551 349) rotate(-17) scale(0.22)" stroke="#352a42"/><use href="#d_star" transform="translate(603 354) rotate(12) scale(0.21)" stroke="#352b41"/><use href="#d_bone" transform="translate(673 347) rotate(26) scale(0.22)" stroke="#342b41"/><use href="#d_star" transform="translate(725 352) rotate(-24) scale(0.20)" stroke="#332b40"/><use href="#d_ghost" transform="translate(787 346) rotate(28) scale(0.27)" stroke="#322b40"/><use href="#d_star" transform="translate(841 355) rotate(22) scale(0.16)" stroke="#322b3f"/><use href="#d_cherry" transform="translate(52 404) rotate(17) scale(0.24)" stroke="#3d2a45"/><use href="#d_heart" transform="translate(111 410) rotate(-22) scale(0.21)" stroke="#3d2a44"/><use href="#d_star" transform="translate(169 405) rotate(-5) scale(0.18)" stroke="#3c2a44"/><use href="#d_cherry" transform="translate(227 402) rotate(-22) scale(0.17)" stroke="#3b2a43"/><use href="#d_star" transform="translate(295 408) rotate(1) scale(0.24)" stroke="#3a2b42"/><use href="#d_planet" transform="translate(347 406) rotate(-29) scale(0.25)" stroke="#392b42"/><use href="#d_sheep" transform="translate(402 408) rotate(2) scale(0.23)" stroke="#392b42"/><use href="#d_cherry" transform="translate(458 401) rotate(21) scale(0.21)" stroke="#382b41"/><use href="#d_spiral" transform="translate(517 404) rotate(9) scale(0.20)" stroke="#372b41"/><use href="#d_cherry" transform="translate(579 409) rotate(4) scale(0.24)" stroke="#362b40"/><use href="#d_spiral" transform="translate(638 409) rotate(6) scale(0.18)" stroke="#362c40"/><use href="#d_sheep" transform="translate(693 401) rotate(-4) scale(0.25)" stroke="#352c3f"/><use href="#d_cloud" transform="translate(753 400) rotate(-7) scale(0.23)" stroke="#342c3f"/><use href="#d_panda" transform="translate(810 408) rotate(-8) scale(0.22)" stroke="#332c3e"/><use href="#d_moon" transform="translate(27 460) rotate(28) scale(0.21)" stroke="#3f2b44"/><use href="#d_spiral" transform="translate(85 460) rotate(16) scale(0.18)" stroke="#3e2b44"/><use href="#d_spiral" transform="translate(140 456) rotate(-24) scale(0.16)" stroke="#3d2b43"/><use href="#d_carrot" transform="translate(200 457) rotate(-8) scale(0.27)" stroke="#3c2b43"/><use href="#d_bone" transform="translate(256 460) rotate(20) scale(0.24)" stroke="#3c2c42"/><use href="#d_strawberry" transform="translate(317 457) rotate(-27) scale(0.27)" stroke="#3b2c41"/><use href="#d_saturn2" transform="translate(380 454) rotate(-10) scale(0.23)" stroke="#3a2c41"/><use href="#d_mug" transform="translate(438 460) rotate(-30) scale(0.27)" stroke="#392c40"/><use href="#d_pizza" transform="translate(496 458) rotate(-25) scale(0.23)" stroke="#382c40"/><use href="#d_carrot" transform="translate(553 455) rotate(-3) scale(0.28)" stroke="#382c3f"/><use href="#d_whale" transform="translate(614 461) rotate(3) scale(0.27)" stroke="#372c3f"/><use href="#d_moon" transform="translate(662 455) rotate(25) scale(0.20)" stroke="#362c3e"/><use href="#d_heart" transform="translate(722 458) rotate(-14) scale(0.17)" stroke="#352d3e"/><use href="#d_rocket" transform="translate(782 463) rotate(26) scale(0.27)" stroke="#352d3d"/><use href="#d_bone" transform="translate(841 461) rotate(15) scale(0.17)" stroke="#342d3d"/><use href="#d_spiral" transform="translate(54 511) rotate(18) scale(0.19)" stroke="#3f2c43"/><use href="#d_bone" transform="translate(118 513) rotate(5) scale(0.19)" stroke="#3f2c43"/><use href="#d_moon" transform="translate(174 518) rotate(8) scale(0.20)" stroke="#3e2c42"/><use href="#d_heart" transform="translate(230 512) rotate(-15) scale(0.22)" stroke="#3d2c41"/><use href="#d_pizza" transform="translate(287 510) rotate(29) scale(0.26)" stroke="#3c2d41"/><use href="#d_star" transform="translate(353 513) rotate(7) scale(0.17)" stroke="#3b2d40"/><use href="#d_moon" transform="translate(408 513) rotate(-20) scale(0.19)" stroke="#3b2d40"/><use href="#d_spiral" transform="translate(464 513) rotate(-24) scale(0.22)" stroke="#3a2d3f"/><use href="#d_cherry" transform="translate(525 510) rotate(-9) scale(0.22)" stroke="#392d3e"/><use href="#d_spiral" transform="translate(576 510) rotate(-8) scale(0.22)" stroke="#382d3e"/><use href="#d_moon" transform="translate(643 515) rotate(-23) scale(0.24)" stroke="#382d3d"/><use href="#d_strawberry" transform="translate(694 510) rotate(4) scale(0.24)" stroke="#372d3d"/><use href="#d_spiral" transform="translate(751 509) rotate(-21) scale(0.24)" stroke="#362d3c"/><use href="#d_star" transform="translate(811 516) rotate(3) scale(0.21)" stroke="#362e3b"/><use href="#d_spiral" transform="translate(32 565) rotate(3) scale(0.21)" stroke="#412d43"/><use href="#d_star" transform="translate(87 569) rotate(0) scale(0.24)" stroke="#402d42"/><use href="#d_cherry" transform="translate(146 565) rotate(26) scale(0.17)" stroke="#3f2d41"/><use href="#d_fish" transform="translate(205 563) rotate(28) scale(0.29)" stroke="#3e2d41"/><use href="#d_star" transform="translate(257 566) rotate(10) scale(0.16)" stroke="#3e2d40"/><use href="#d_moon" transform="translate(314 562) rotate(28) scale(0.24)" stroke="#3d2e40"/><use href="#d_moon" transform="translate(382 567) rotate(2) scale(0.17)" stroke="#3c2e3f"/><use href="#d_moon" transform="translate(433 567) rotate(-22) scale(0.17)" stroke="#3c2e3e"/><use href="#d_cherry" transform="translate(489 569) rotate(24) scale(0.17)" stroke="#3b2e3e"/><use href="#d_star" transform="translate(548 564) rotate(27) scale(0.24)" stroke="#3a2e3d"/><use href="#d_gift" transform="translate(614 571) rotate(18) scale(0.27)" stroke="#392e3c"/><use href="#d_pineapple" transform="translate(673 568) rotate(-25) scale(0.29)" stroke="#382e3c"/><use href="#d_heart" transform="translate(725 572) rotate(-12) scale(0.18)" stroke="#382e3b"/><use href="#d_star" transform="translate(789 566) rotate(1) scale(0.22)" stroke="#372e3a"/><use href="#d_face" transform="translate(842 570) rotate(27) scale(0.25)" stroke="#362e3a"/><use href="#d_bone" transform="translate(55 620) rotate(16) scale(0.16)" stroke="#412e42"/><use href="#d_spiral" transform="translate(113 622) rotate(-9) scale(0.20)" stroke="#412e41"/><use href="#d_star" transform="translate(176 625) rotate(-15) scale(0.17)" stroke="#402e40"/><use href="#d_star" transform="translate(232 624) rotate(7) scale(0.21)" stroke="#3f2f40"/><use href="#d_heart" transform="translate(291 622) rotate(-16) scale(0.17)" stroke="#3f2f3f"/><use href="#d_bottle" transform="translate(346 619) rotate(2) scale(0.28)" stroke="#3e2f3e"/><use href="#d_star" transform="translate(401 624) rotate(3) scale(0.16)" stroke="#3d2f3e"/><use href="#d_heart" transform="translate(460 623) rotate(-7) scale(0.24)" stroke="#3c2f3d"/><use href="#d_snail" transform="translate(518 624) rotate(-18) scale(0.30)" stroke="#3c2f3c"/><use href="#d_pizza" transform="translate(585 622) rotate(19) scale(0.26)" stroke="#3b2f3c"/><use href="#d_heart" transform="translate(632 621) rotate(-20) scale(0.19)" stroke="#3a2f3b"/><use href="#d_star" transform="translate(691 618) rotate(-9) scale(0.23)" stroke="#392f3a"/><use href="#d_bottle" transform="translate(759 617) rotate(-22) scale(0.24)" stroke="#382f3a"/><use href="#d_turtle" transform="translate(814 625) rotate(14) scale(0.25)" stroke="#382f39"/><use href="#d_spiral" transform="translate(32 677) rotate(-23) scale(0.17)" stroke="#432f41"/><use href="#d_cherry" transform="translate(87 675) rotate(-24) scale(0.18)" stroke="#422f41"/><use href="#d_anchor" transform="translate(147 670) rotate(28) scale(0.23)" stroke="#412f40"/><use href="#d_cherry" transform="translate(205 671) rotate(6) scale(0.20)" stroke="#412f3f"/><use href="#d_bone" transform="translate(265 675) rotate(-29) scale(0.24)" stroke="#402f3e"/><use href="#d_star" transform="translate(322 674) rotate(-6) scale(0.16)" stroke="#3f303e"/><use href="#d_bone" transform="translate(381 680) rotate(-0) scale(0.22)" stroke="#3f303d"/><use href="#d_heart" transform="translate(437 675) rotate(28) scale(0.17)" stroke="#3e303c"/><use href="#d_moon" transform="translate(491 678) rotate(7) scale(0.20)" stroke="#3d303c"/><use href="#d_dino" transform="translate(549 674) rotate(-4) scale(0.27)" stroke="#3c303b"/><use href="#d_cupcake" transform="translate(610 673) rotate(26) scale(0.24)" stroke="#3c303a"/><use href="#d_cherry" transform="translate(671 679) rotate(25) scale(0.20)" stroke="#3b3039"/><use href="#d_cherry" transform="translate(728 679) rotate(-21) scale(0.21)" stroke="#3a3039"/><use href="#d_moon" transform="translate(788 673) rotate(-1) scale(0.16)" stroke="#393038"/><use href="#d_sheep" transform="translate(836 677) rotate(10) scale(0.27)" stroke="#393037"/><use href="#d_spiral" transform="translate(62 730) rotate(-1) scale(0.20)" stroke="#443040"/><use href="#d_bone" transform="translate(118 734) rotate(-13) scale(0.16)" stroke="#43303f"/><use href="#d_heart" transform="translate(169 730) rotate(24) scale(0.18)" stroke="#42303f"/><use href="#d_heart" transform="translate(232 728) rotate(-1) scale(0.20)" stroke="#41303e"/><use href="#d_spiral" transform="translate(287 732) rotate(9) scale(0.23)" stroke="#41313d"/><use href="#d_moon" transform="translate(350 728) rotate(11) scale(0.23)" stroke="#40303c"/><use href="#d_feather" transform="translate(410 731) rotate(-1) scale(0.23)" stroke="#3f313c"/><use href="#d_anchor" transform="translate(467 724) rotate(-2) scale(0.27)" stroke="#3e303b"/><use href="#d_moon" transform="translate(524 731) rotate(29) scale(0.23)" stroke="#3e313a"/><use href="#d_bone" transform="translate(576 727) rotate(-19) scale(0.18)" stroke="#3d3139"/><use href="#d_flower" transform="translate(640 732) rotate(10) scale(0.28)" stroke="#3c3138"/><use href="#d_heart" transform="translate(695 728) rotate(27) scale(0.21)" stroke="#3c3138"/><use href="#d_spiral" transform="translate(756 729) rotate(23) scale(0.16)" stroke="#3b3137"/><use href="#d_cherry" transform="translate(812 734) rotate(12) scale(0.22)" stroke="#3a3136"/><use href="#d_snail" transform="translate(31 785) rotate(-27) scale(0.25)" stroke="#453140"/><use href="#d_spiral" transform="translate(81 783) rotate(16) scale(0.24)" stroke="#44313f"/><use href="#d_bone" transform="translate(143 781) rotate(-24) scale(0.17)" stroke="#44313e"/><use href="#d_cherry" transform="translate(205 779) rotate(-18) scale(0.24)" stroke="#43313e"/><use href="#d_heart" transform="translate(262 780) rotate(28) scale(0.19)" stroke="#42313d"/><use href="#d_burger" transform="translate(317 787) rotate(-6) scale(0.25)" stroke="#42313c"/><use href="#d_planet" transform="translate(374 783) rotate(-1) scale(0.25)" stroke="#41313b"/><use href="#d_anchor" transform="translate(434 784) rotate(-15) scale(0.29)" stroke="#40313a"/><use href="#d_star" transform="translate(493 788) rotate(29) scale(0.17)" stroke="#3f3239"/><use href="#d_dino" transform="translate(552 780) rotate(-11) scale(0.28)" stroke="#3f3139"/><use href="#d_turtle" transform="translate(612 784) rotate(29) scale(0.22)" stroke="#3e3238"/><use href="#d_heart" transform="translate(672 780) rotate(-30) scale(0.20)" stroke="#3d3137"/><use href="#d_carrot" transform="translate(725 784) rotate(17) scale(0.26)" stroke="#3d3236"/><use href="#d_cherry" transform="translate(780 786) rotate(-25) scale(0.19)" stroke="#3c3235"/><use href="#d_bone" transform="translate(842 780) rotate(-26) scale(0.16)" stroke="#3b3135"/><use href="#d_star" transform="translate(238 833) rotate(13) scale(0.23)" stroke="#43323c"/><use href="#d_heart" transform="translate(352 834) rotate(-3) scale(0.22)" stroke="#42323b"/></g><g><circle cx="207" cy="575" r="1.1" fill="#3f2e41"/><circle cx="463" cy="444" r="1.1" fill="#392c40"/><circle cx="813" cy="111" r="1.1" fill="#2d2845"/><circle cx="643" cy="265" r="1.1" fill="#322943"/><circle cx="599" cy="775" r="1.1" fill="#3e3138"/><circle cx="226" cy="462" r="1.1" fill="#3c2c42"/><circle cx="435" cy="404" r="1.1" fill="#382b41"/><circle cx="138" cy="510" r="1.1" fill="#3e2c42"/><circle cx="736" cy="541" r="1.1" fill="#372e3c"/><circle cx="238" cy="657" r="1.1" fill="#402f3f"/><circle cx="346" cy="118" r="1.1" fill="#332647"/><circle cx="499" cy="375" r="1.1" fill="#372b41"/><circle cx="437" cy="808" r="1.1" fill="#41323a"/><circle cx="469" cy="777" r="1.1" fill="#40313a"/><circle cx="291" cy="619" r="1.1" fill="#3e2e3f"/><circle cx="62" cy="245" r="1.1" fill="#3a2747"/><circle cx="570" cy="563" r="1.1" fill="#3a2e3d"/><circle cx="683" cy="310" r="1.1" fill="#332a41"/><circle cx="225" cy="292" r="1.1" fill="#392845"/><circle cx="443" cy="20" r="1.1" fill="#302449"/><circle cx="309" cy="536" r="1.1" fill="#3d2d40"/><circle cx="122" cy="254" r="1.1" fill="#392746"/><circle cx="719" cy="761" r="1.1" fill="#3c3137"/><circle cx="206" cy="145" r="1.1" fill="#362647"/><circle cx="97" cy="70" r="1.1" fill="#362449"/><circle cx="654" cy="602" r="1.1" fill="#392f3b"/><circle cx="218" cy="399" r="1.1" fill="#3b2a43"/><circle cx="573" cy="23" r="1.1" fill="#2e2548"/><circle cx="675" cy="701" r="1.1" fill="#3b3039"/><circle cx="174" cy="573" r="1.1" fill="#3f2e41"/><circle cx="576" cy="275" r="1.1" fill="#332943"/><circle cx="724" cy="178" r="1.1" fill="#2f2844"/><circle cx="391" cy="256" r="1.1" fill="#362844"/><circle cx="364" cy="662" r="1.1" fill="#3e2f3d"/><circle cx="470" cy="497" r="1.1" fill="#3a2d3f"/><circle cx="813" cy="182" r="1.1" fill="#2e2944"/><circle cx="184" cy="505" r="1.1" fill="#3e2c42"/><circle cx="124" cy="786" r="1.1" fill="#44313f"/><circle cx="281" cy="359" r="1.1" fill="#392a43"/><circle cx="355" cy="675" r="1.1" fill="#3f303d"/><circle cx="754" cy="552" r="1.1" fill="#372e3b"/><circle cx="141" cy="289" r="1.1" fill="#3a2845"/><circle cx="582" cy="176" r="1.1" fill="#312845"/><circle cx="727" cy="711" r="1.1" fill="#3b3038"/><circle cx="187" cy="297" r="1.1" fill="#392845"/><circle cx="188" cy="586" r="1.1" fill="#3f2e41"/><circle cx="39" cy="567" r="1.1" fill="#412d43"/><circle cx="52" cy="686" r="1.1" fill="#432f41"/><circle cx="448" cy="475" r="1.1" fill="#392c40"/><circle cx="78" cy="36" r="1.1" fill="#362349"/><circle cx="291" cy="803" r="1.1" fill="#42323c"/><circle cx="494" cy="703" r="1.1" fill="#3e303b"/><circle cx="52" cy="83" r="1.1" fill="#372449"/><circle cx="17" cy="568" r="1.1" fill="#412d43"/><circle cx="145" cy="222" r="1.1" fill="#382746"/><circle cx="550" cy="567" r="1.1" fill="#3a2e3d"/><circle cx="266" cy="381" r="1.1" fill="#3a2a43"/><circle cx="238" cy="457" r="1.1" fill="#3c2b42"/><circle cx="293" cy="293" r="1.1" fill="#382944"/><circle cx="205" cy="238" r="1.1" fill="#382746"/><circle cx="215" cy="13" r="1.1" fill="#332349"/><circle cx="256" cy="483" r="1.1" fill="#3c2c42"/><circle cx="221" cy="92" r="1.1" fill="#352548"/><circle cx="697" cy="382" r="1.1" fill="#342b40"/><circle cx="422" cy="254" r="1.1" fill="#352844"/><circle cx="731" cy="615" r="1.1" fill="#392f3a"/><circle cx="513" cy="537" r="1.1" fill="#3a2d3e"/><circle cx="571" cy="408" r="1.1" fill="#362b40"/><circle cx="340" cy="318" r="1.1" fill="#382944"/><circle cx="415" cy="382" r="1.1" fill="#382b42"/><circle cx="436" cy="434" r="1.1" fill="#392c41"/><circle cx="650" cy="727" r="1.1" fill="#3c3138"/><circle cx="185" cy="18" r="1.1" fill="#342349"/><circle cx="248" cy="26" r="1.1" fill="#332449"/><circle cx="656" cy="506" r="1.1" fill="#372d3d"/><circle cx="235" cy="156" r="1.1" fill="#362647"/><circle cx="716" cy="681" r="1.1" fill="#3a3039"/><circle cx="563" cy="564" r="1.1" fill="#3a2e3d"/><circle cx="614" cy="371" r="1.1" fill="#352b41"/><circle cx="327" cy="451" r="1.1" fill="#3b2c41"/><circle cx="725" cy="808" r="1.1" fill="#3d3236"/><circle cx="756" cy="681" r="1.1" fill="#3a3038"/><circle cx="61" cy="201" r="1.1" fill="#392647"/><circle cx="800" cy="443" r="1.1" fill="#342c3d"/><circle cx="424" cy="253" r="1.1" fill="#352844"/><circle cx="710" cy="421" r="1.1" fill="#352c3f"/><circle cx="816" cy="62" r="1.1" fill="#2b2747"/><circle cx="818" cy="11" r="1.1" fill="#2a2648"/><circle cx="122" cy="317" r="1.1" fill="#3b2945"/><circle cx="527" cy="90" r="1.1" fill="#302647"/><circle cx="463" cy="766" r="1.1" fill="#3f313a"/><circle cx="359" cy="621" r="1.1" fill="#3e2f3e"/><circle cx="488" cy="475" r="1.1" fill="#392c40"/><circle cx="143" cy="378" r="1.1" fill="#3c2a44"/><circle cx="742" cy="549" r="1.1" fill="#372e3b"/><circle cx="179" cy="364" r="1.1" fill="#3b2a44"/><circle cx="448" cy="274" r="1.1" fill="#352944"/><circle cx="476" cy="515" r="1.1" fill="#3a2d3f"/><circle cx="15" cy="179" r="1.1" fill="#392648"/><circle cx="541" cy="175" r="1.1" fill="#322745"/><circle cx="60" cy="621" r="1.1" fill="#412e42"/><circle cx="275" cy="781" r="1.1" fill="#42313d"/><circle cx="460" cy="83" r="1.1" fill="#312647"/><circle cx="525" cy="214" r="1.1" fill="#332844"/><circle cx="671" cy="590" r="1.1" fill="#392e3b"/><circle cx="625" cy="47" r="1.1" fill="#2e2647"/><circle cx="28" cy="650" r="1.1" fill="#422f42"/><circle cx="116" cy="164" r="1.1" fill="#382647"/><circle cx="25" cy="133" r="1.1" fill="#382548"/><circle cx="390" cy="781" r="1.1" fill="#41313b"/><circle cx="265" cy="211" r="1.1" fill="#362746"/><circle cx="682" cy="150" r="1.1" fill="#2f2845"/><circle cx="523" cy="501" r="1.1" fill="#392d3f"/><circle cx="771" cy="36" r="1.1" fill="#2c2647"/><circle cx="464" cy="312" r="1.1" fill="#362a43"/><circle cx="679" cy="206" r="1.1" fill="#312944"/><circle cx="589" cy="151" r="1.1" fill="#312745"/><circle cx="408" cy="789" r="1.1" fill="#41323b"/><circle cx="198" cy="227" r="1.1" fill="#382746"/><circle cx="756" cy="550" r="1.1" fill="#372e3b"/><circle cx="54" cy="152" r="1.1" fill="#382548"/><circle cx="195" cy="236" r="1.1" fill="#382746"/><circle cx="696" cy="571" r="1.1" fill="#382e3b"/><circle cx="807" cy="546" r="1.1" fill="#362e3b"/><circle cx="517" cy="312" r="1.1" fill="#352a43"/><circle cx="591" cy="402" r="1.1" fill="#362b40"/><circle cx="49" cy="401" r="1.1" fill="#3d2a45"/><circle cx="316" cy="433" r="1.1" fill="#3a2b42"/><circle cx="40" cy="23" r="1.1" fill="#36234a"/><circle cx="810" cy="303" r="1.1" fill="#312a41"/><circle cx="272" cy="121" r="1.1" fill="#352547"/><circle cx="488" cy="745" r="1.1" fill="#3f313a"/><circle cx="149" cy="408" r="1.1" fill="#3c2a44"/><circle cx="412" cy="624" r="1.1" fill="#3d2f3e"/><circle cx="466" cy="195" r="1.1" fill="#332845"/><circle cx="156" cy="591" r="1.1" fill="#402e41"/><circle cx="64" cy="705" r="1.1" fill="#433041"/><circle cx="28" cy="154" r="1.1" fill="#392548"/><circle cx="385" cy="688" r="1.1" fill="#3f303d"/><circle cx="511" cy="608" r="1.1" fill="#3b2f3d"/><circle cx="627" cy="589" r="1.1" fill="#3a2e3c"/><circle cx="43" cy="673" r="1.1" fill="#432f41"/><circle cx="122" cy="132" r="1.1" fill="#372548"/><circle cx="31" cy="23" r="1.1" fill="#36234a"/><circle cx="723" cy="310" r="1.1" fill="#322a41"/><circle cx="71" cy="38" r="1.1" fill="#362349"/><circle cx="697" cy="490" r="1.1" fill="#362d3d"/><circle cx="755" cy="30" r="1.1" fill="#2c2647"/><circle cx="93" cy="234" r="1.1" fill="#392747"/><circle cx="157" cy="91" r="1.1" fill="#362448"/><circle cx="165" cy="522" r="1.1" fill="#3e2d42"/><circle cx="139" cy="137" r="1.1" fill="#372548"/><circle cx="441" cy="306" r="1.1" fill="#362943"/><circle cx="123" cy="463" r="1.1" fill="#3d2b43"/><circle cx="419" cy="316" r="1.1" fill="#372943"/><circle cx="391" cy="32" r="1.1" fill="#312448"/><circle cx="507" cy="158" r="1.1" fill="#322746"/><circle cx="277" cy="8" r="1.1" fill="#322349"/><circle cx="731" cy="479" r="1.1" fill="#362d3d"/><circle cx="323" cy="442" r="1.1" fill="#3a2b42"/><circle cx="774" cy="108" r="1.1" fill="#2d2746"/><circle cx="316" cy="577" r="1.1" fill="#3d2e3f"/><circle cx="307" cy="576" r="1.1" fill="#3d2e40"/><circle cx="748" cy="33" r="1.1" fill="#2c2647"/><circle cx="234" cy="239" r="1.1" fill="#372746"/><circle cx="618" cy="639" r="1.1" fill="#3b2f3b"/><circle cx="576" cy="754" r="1.1" fill="#3e3139"/><circle cx="153" cy="321" r="1.1" fill="#3a2945"/><circle cx="703" cy="624" r="1.1" fill="#392f3a"/><circle cx="93" cy="798" r="1.1" fill="#45323f"/><circle cx="610" cy="706" r="1.1" fill="#3c3039"/><circle cx="298" cy="493" r="1.1" fill="#3c2c41"/><circle cx="790" cy="732" r="1.1" fill="#3b3136"/><circle cx="476" cy="725" r="1.1" fill="#3e303b"/><circle cx="823" cy="684" r="1.1" fill="#393037"/><circle cx="540" cy="783" r="1.1" fill="#3f3139"/><circle cx="118" cy="329" r="1.1" fill="#3b2945"/><circle cx="465" cy="107" r="1.1" fill="#312647"/><circle cx="643" cy="51" r="1.1" fill="#2e2647"/><circle cx="518" cy="228" r="1.1" fill="#332844"/><circle cx="266" cy="495" r="1.1" fill="#3c2c41"/><circle cx="158" cy="365" r="1.1" fill="#3b2a44"/><circle cx="706" cy="804" r="1.1" fill="#3d3236"/><circle cx="216" cy="298" r="1.1" fill="#392945"/><circle cx="572" cy="155" r="1.1" fill="#312745"/><circle cx="700" cy="162" r="1.1" fill="#2f2845"/><circle cx="459" cy="277" r="1.1" fill="#352944"/><circle cx="1" cy="1" r="1.1" fill="#36224a"/><circle cx="2" cy="267" r="1.1" fill="#3b2747"/><circle cx="227" cy="808" r="1.1" fill="#43323d"/><circle cx="525" cy="53" r="1.1" fill="#2f2548"/><circle cx="590" cy="189" r="1.1" fill="#312845"/><circle cx="397" cy="589" r="1.1" fill="#3c2e3e"/><circle cx="706" cy="762" r="1.1" fill="#3c3137"/><circle cx="347" cy="259" r="1.1" fill="#362845"/><circle cx="328" cy="255" r="1.1" fill="#362845"/><circle cx="611" cy="377" r="1.1" fill="#352b40"/><circle cx="565" cy="124" r="1.1" fill="#302746"/><circle cx="645" cy="788" r="1.1" fill="#3e3237"/><circle cx="167" cy="503" r="1.1" fill="#3e2c42"/><circle cx="134" cy="29" r="1.1" fill="#352349"/><circle cx="341" cy="149" r="1.1" fill="#342647"/><circle cx="602" cy="466" r="1.1" fill="#372c3f"/><circle cx="556" cy="789" r="1.1" fill="#3f3238"/><circle cx="48" cy="80" r="1.1" fill="#372449"/><circle cx="29" cy="374" r="1.1" fill="#3d2945"/><circle cx="679" cy="557" r="1.1" fill="#382e3c"/><circle cx="451" cy="698" r="1.1" fill="#3e303c"/><circle cx="307" cy="92" r="1.1" fill="#332548"/><circle cx="529" cy="21" r="1.1" fill="#2f2548"/><circle cx="189" cy="24" r="1.1" fill="#342349"/><circle cx="133" cy="52" r="1.1" fill="#352449"/><circle cx="438" cy="104" r="1.1" fill="#322647"/><circle cx="497" cy="672" r="1.1" fill="#3d303c"/><circle cx="284" cy="98" r="1.1" fill="#342548"/><circle cx="553" cy="594" r="1.1" fill="#3b2e3c"/><circle cx="728" cy="452" r="1.1" fill="#352c3e"/><circle cx="480" cy="703" r="1.1" fill="#3e303b"/><circle cx="558" cy="795" r="1.1" fill="#3f3238"/><circle cx="236" cy="631" r="1.1" fill="#3f2f3f"/><circle cx="521" cy="382" r="1.1" fill="#362b41"/><circle cx="9" cy="388" r="1.1" fill="#3e2a45"/><circle cx="217" cy="490" r="1.1" fill="#3d2c42"/><circle cx="420" cy="416" r="1.1" fill="#392b41"/><circle cx="48" cy="107" r="1.1" fill="#372448"/><circle cx="500" cy="556" r="1.1" fill="#3a2e3e"/><circle cx="816" cy="646" r="1.1" fill="#383038"/><circle cx="239" cy="371" r="1.1" fill="#3a2a44"/><circle cx="417" cy="655" r="1.1" fill="#3e2f3d"/><circle cx="325" cy="750" r="1.1" fill="#41313c"/><circle cx="399" cy="324" r="1.1" fill="#372a43"/><circle cx="395" cy="291" r="1.1" fill="#362944"/><circle cx="824" cy="38" r="1.1" fill="#2b2747"/><circle cx="329" cy="65" r="1.1" fill="#332548"/><circle cx="559" cy="123" r="1.1" fill="#302746"/><circle cx="123" cy="345" r="1.1" fill="#3b2945"/><circle cx="496" cy="622" r="1.1" fill="#3c2f3d"/><circle cx="366" cy="241" r="1.1" fill="#362845"/><circle cx="303" cy="724" r="1.1" fill="#40303d"/><circle cx="176" cy="9" r="1.1" fill="#342349"/><circle cx="730" cy="394" r="1.1" fill="#342c3f"/><circle cx="109" cy="111" r="1.1" fill="#372548"/><circle cx="734" cy="611" r="1.1" fill="#392f3a"/><circle cx="53" cy="550" r="1.1" fill="#402d43"/><circle cx="176" cy="363" r="1.1" fill="#3b2a44"/><circle cx="499" cy="41" r="1.1" fill="#302548"/><circle cx="771" cy="273" r="1.1" fill="#312a42"/><circle cx="119" cy="636" r="1.1" fill="#412f41"/><circle cx="90" cy="30" r="1.1" fill="#352349"/><circle cx="537" cy="383" r="1.1" fill="#362b41"/><circle cx="742" cy="644" r="1.1" fill="#392f39"/><circle cx="170" cy="37" r="1.1" fill="#342449"/><circle cx="497" cy="383" r="1.1" fill="#372b41"/><circle cx="248" cy="747" r="1.1" fill="#42313d"/><circle cx="172" cy="524" r="1.1" fill="#3e2d42"/><circle cx="61" cy="753" r="1.1" fill="#443140"/><circle cx="782" cy="504" r="1.1" fill="#362d3c"/><circle cx="264" cy="590" r="1.1" fill="#3e2e40"/><circle cx="744" cy="648" r="1.1" fill="#392f39"/><circle cx="34" cy="411" r="1.1" fill="#3e2a45"/><circle cx="115" cy="445" r="1.1" fill="#3d2b43"/><circle cx="783" cy="705" r="1.1" fill="#3a3037"/><circle cx="205" cy="450" r="1.1" fill="#3c2b43"/><circle cx="262" cy="137" r="1.1" fill="#352647"/><circle cx="613" cy="619" r="1.1" fill="#3a2f3b"/><circle cx="277" cy="342" r="1.1" fill="#392a44"/><circle cx="574" cy="593" r="1.1" fill="#3a2e3c"/><circle cx="382" cy="96" r="1.1" fill="#322647"/><circle cx="79" cy="138" r="1.1" fill="#382548"/><circle cx="681" cy="404" r="1.1" fill="#352c3f"/><circle cx="531" cy="297" r="1.1" fill="#352943"/><circle cx="304" cy="143" r="1.1" fill="#352647"/><circle cx="803" cy="494" r="1.1" fill="#352d3c"/><circle cx="106" cy="573" r="1.1" fill="#402d42"/><circle cx="493" cy="500" r="1.1" fill="#392d3f"/><circle cx="634" cy="496" r="1.1" fill="#372d3e"/><circle cx="722" cy="790" r="1.1" fill="#3d3236"/><circle cx="335" cy="528" r="1.1" fill="#3c2d40"/><circle cx="308" cy="335" r="1.1" fill="#382944"/><circle cx="302" cy="528" r="1.1" fill="#3c2d40"/><circle cx="290" cy="287" r="1.1" fill="#382945"/><circle cx="698" cy="652" r="1.1" fill="#3a2f3a"/><circle cx="557" cy="688" r="1.1" fill="#3d303b"/><circle cx="318" cy="524" r="1.1" fill="#3c2d40"/><circle cx="207" cy="257" r="1.1" fill="#382846"/><circle cx="83" cy="651" r="1.1" fill="#422f41"/><circle cx="759" cy="247" r="1.1" fill="#302942"/><circle cx="312" cy="95" r="1.1" fill="#332548"/><circle cx="117" cy="520" r="1.1" fill="#3f2c42"/><circle cx="735" cy="68" r="1.1" fill="#2d2747"/><circle cx="210" cy="619" r="1.1" fill="#3f2e40"/><circle cx="186" cy="715" r="1.1" fill="#42303f"/><circle cx="291" cy="386" r="1.1" fill="#3a2a43"/><circle cx="166" cy="237" r="1.1" fill="#382746"/><circle cx="350" cy="227" r="1.1" fill="#362845"/><circle cx="601" cy="25" r="1.1" fill="#2e2548"/><circle cx="526" cy="654" r="1.1" fill="#3c2f3c"/><circle cx="269" cy="156" r="1.1" fill="#352647"/><circle cx="99" cy="63" r="1.1" fill="#362449"/><circle cx="653" cy="491" r="1.1" fill="#372d3e"/><circle cx="12" cy="369" r="1.1" fill="#3d2945"/><circle cx="493" cy="260" r="1.1" fill="#342944"/><circle cx="29" cy="343" r="1.1" fill="#3c2946"/><circle cx="291" cy="792" r="1.1" fill="#42323c"/><circle cx="296" cy="752" r="1.1" fill="#41313d"/><circle cx="715" cy="468" r="1.1" fill="#362d3e"/><circle cx="104" cy="658" r="1.1" fill="#422f41"/><circle cx="74" cy="454" r="1.1" fill="#3e2b44"/><circle cx="80" cy="75" r="1.1" fill="#362449"/><circle cx="338" cy="127" r="1.1" fill="#342647"/><circle cx="817" cy="471" r="1.1" fill="#342d3d"/><circle cx="739" cy="780" r="1.1" fill="#3c3136"/><circle cx="625" cy="526" r="1.1" fill="#382d3d"/><circle cx="390" cy="634" r="1.1" fill="#3e2f3e"/><circle cx="552" cy="129" r="1.1" fill="#312746"/><circle cx="437" cy="337" r="1.1" fill="#372a43"/><circle cx="425" cy="581" r="1.1" fill="#3c2e3e"/><circle cx="568" cy="464" r="1.1" fill="#382c3f"/><circle cx="650" cy="673" r="1.1" fill="#3b303a"/><circle cx="76" cy="118" r="1.1" fill="#372548"/><circle cx="39" cy="131" r="1.1" fill="#382548"/><circle cx="790" cy="252" r="1.1" fill="#302a42"/><circle cx="362" cy="379" r="1.1" fill="#392a42"/><circle cx="465" cy="228" r="1.1" fill="#342844"/><circle cx="642" cy="270" r="1.1" fill="#322943"/><circle cx="697" cy="655" r="1.1" fill="#3a3039"/><circle cx="1" cy="446" r="1.1" fill="#3f2b45"/><circle cx="77" cy="720" r="1.1" fill="#433040"/><circle cx="57" cy="218" r="1.1" fill="#392647"/><circle cx="633" cy="482" r="1.1" fill="#372d3e"/><circle cx="550" cy="337" r="1.1" fill="#352a42"/><circle cx="429" cy="166" r="1.1" fill="#332746"/><circle cx="381" cy="210" r="1.1" fill="#352745"/><circle cx="557" cy="87" r="1.1" fill="#302647"/><circle cx="113" cy="161" r="1.1" fill="#382647"/><circle cx="439" cy="474" r="1.1" fill="#3a2c40"/><circle cx="2" cy="805" r="1.1" fill="#463240"/><circle cx="688" cy="310" r="1.1" fill="#332a41"/><circle cx="131" cy="673" r="1.1" fill="#422f40"/><circle cx="805" cy="145" r="1.1" fill="#2d2845"/><circle cx="623" cy="667" r="1.1" fill="#3b303a"/><circle cx="772" cy="170" r="1.1" fill="#2e2844"/><circle cx="99" cy="134" r="1.1" fill="#372548"/><circle cx="191" cy="734" r="1.1" fill="#42303e"/><circle cx="750" cy="386" r="1.1" fill="#342b3f"/><circle cx="105" cy="287" r="1.1" fill="#3a2846"/><circle cx="199" cy="528" r="1.1" fill="#3e2d41"/><circle cx="593" cy="633" r="1.1" fill="#3b2f3b"/><circle cx="360" cy="372" r="1.1" fill="#382a43"/><circle cx="386" cy="302" r="1.1" fill="#372944"/><circle cx="375" cy="558" r="1.1" fill="#3c2e3f"/><circle cx="586" cy="266" r="1.1" fill="#332943"/><circle cx="467" cy="118" r="1.1" fill="#322647"/><circle cx="37" cy="315" r="1.1" fill="#3c2846"/><circle cx="296" cy="26" r="1.1" fill="#322449"/><circle cx="66" cy="347" r="1.1" fill="#3c2945"/><circle cx="776" cy="683" r="1.1" fill="#3a3038"/><circle cx="25" cy="258" r="1.1" fill="#3b2747"/><circle cx="304" cy="254" r="1.1" fill="#372845"/><circle cx="113" cy="481" r="1.1" fill="#3e2c43"/><circle cx="691" cy="311" r="1.1" fill="#332a41"/><circle cx="145" cy="86" r="1.1" fill="#362448"/><circle cx="12" cy="624" r="1.1" fill="#422e42"/><circle cx="190" cy="590" r="1.1" fill="#3f2e41"/><circle cx="652" cy="68" r="1.1" fill="#2e2647"/><circle cx="156" cy="257" r="1.1" fill="#392846"/><circle cx="634" cy="601" r="1.1" fill="#3a2f3b"/><circle cx="250" cy="368" r="1.1" fill="#3a2a44"/><circle cx="293" cy="384" r="1.1" fill="#3a2a43"/><circle cx="654" cy="213" r="1.1" fill="#312944"/><circle cx="668" cy="750" r="1.1" fill="#3c3138"/><circle cx="495" cy="782" r="1.1" fill="#3f3139"/><circle cx="773" cy="139" r="1.1" fill="#2e2845"/><circle cx="817" cy="163" r="1.1" fill="#2e2844"/><circle cx="663" cy="99" r="1.1" fill="#2e2746"/><circle cx="249" cy="360" r="1.1" fill="#3a2a44"/><circle cx="691" cy="555" r="1.1" fill="#382e3c"/><circle cx="168" cy="732" r="1.1" fill="#42303f"/><circle cx="713" cy="416" r="1.1" fill="#352c3f"/><circle cx="42" cy="233" r="1.1" fill="#3a2747"/><circle cx="241" cy="341" r="1.1" fill="#392944"/><circle cx="777" cy="485" r="1.1" fill="#352d3d"/><circle cx="675" cy="58" r="1.1" fill="#2d2647"/><circle cx="202" cy="596" r="1.1" fill="#3f2e40"/><circle cx="281" cy="185" r="1.1" fill="#362746"/><circle cx="52" cy="41" r="1.1" fill="#362349"/><circle cx="340" cy="445" r="1.1" fill="#3a2b41"/><circle cx="330" cy="460" r="1.1" fill="#3b2c41"/><circle cx="240" cy="14" r="1.1" fill="#332349"/><circle cx="556" cy="274" r="1.1" fill="#342943"/><circle cx="405" cy="308" r="1.1" fill="#372943"/><circle cx="222" cy="42" r="1.1" fill="#342449"/><circle cx="244" cy="243" r="1.1" fill="#372846"/><circle cx="95" cy="24" r="1.1" fill="#352349"/><circle cx="396" cy="16" r="1.1" fill="#312449"/><circle cx="724" cy="294" r="1.1" fill="#322a41"/><circle cx="366" cy="428" r="1.1" fill="#3a2b42"/><circle cx="20" cy="83" r="1.1" fill="#372449"/><circle cx="647" cy="454" r="1.1" fill="#362c3e"/><circle cx="406" cy="280" r="1.1" fill="#362944"/></g></svg></div>
<div class="abs" id="chathdr"></div>
<div class="abs" id="vline"></div>
<div class="abs" id="panel"></div>
<div class="abs" id="strip"></div>




<!-- chat header -->
<svg style="left:11px;top:20px" width="20" height="20" viewBox="0 0 20 20"><path d="M17.5 10H3M10 3L3 10L10 17" fill="none" stroke="#aaaaaa" stroke-width="2" stroke-linecap="round" stroke-linejoin="round"/></svg>
<svg style="left:50px;top:9px" width="42" height="42"><use href="#avatar"/></svg>
<div class="t" style="left:110px;top:13.5px;font-size:16px;font-weight:bold;letter-spacing:-0.73px">Aleksey</div>
<div class="t grey" style="left:110.4px;top:32.6px;font-size:14px">был(а) недавно</div>
<!-- phone -->
<svg style="left:681px;top:19px" width="24" height="22" viewBox="0 0 24 22"><path d="M5.400 11.600C9.400 9 10 1.700 5.800 1.300C2.800 1.100 1.700 4 2.300 7C3 11 5.500 14.200 9 16.600C11.500 18.500 14.500 20.300 17 20.700C19.500 21.100 22 20.200 22 17.600C22 14.600 19.200 13 17.100 13.300C15.100 13.600 13.300 15.600 12.300 18.100" fill="none" stroke="#aaaaaa" stroke-width="2" stroke-linecap="round" stroke-linejoin="round"/></svg>
<!-- search -->
<svg style="left:730px;top:19px" width="22" height="22" viewBox="0 0 22 22"><circle cx="9.4" cy="9" r="6.5" fill="none" stroke="#aaaaaa" stroke-width="2.1"/><path d="M14.2 13.9L19.4 19.3" stroke="#aaaaaa" stroke-width="2.2" stroke-linecap="round"/></svg>
<!-- dots -->
<svg style="left:784px;top:20px" width="10" height="20" viewBox="0 0 10 20"><circle cx="5" cy="4" r="2.2" fill="#aaaaaa"/><circle cx="5" cy="10.1" r="2.2" fill="#aaaaaa"/><circle cx="5" cy="16.2" r="2.2" fill="#aaaaaa"/></svg>

<!-- panel header -->
<svg style="left:852px;top:21px" width="18" height="18" viewBox="0 0 18 18"><path d="M2 2L16 16M16 2L2 16" stroke="#aaaaaa" stroke-width="2" stroke-linecap="round"/></svg>
<div class="t" style="left:905.8px;top:19.7px;font-size:20px;font-weight:bold;letter-spacing:-0.78px">Информация</div>

<svg style="left:975px;top:74px" width="120" height="120"><use href="#avatar"/></svg>
<div class="t" style="left:989px;top:213.6px;font-size:20px;font-weight:bold;letter-spacing:-0.87px">Aleksey</div>
<div class="t grey" style="left:983.8px;top:235.7px;font-size:14px">был(а) недавно</div>

<div class="t purple" style="left:849.4px;top:298.5px;font-size:16px;font-weight:bold;letter-spacing:-0.55px">Канал</div>
<div class="abs" style="left:903px;top:297px;width:119px;height:20px;border-radius:6px;background:#393446"></div>
<div class="t purple" style="left:909px;top:300.7px;font-size:12px;font-weight:bold;letter-spacing:-0.15px">27 864 подписчика</div>

<div class="t" style="left:905.6px;top:336.5px;font-size:16px">DPG - Игровые новости</div>
<div class="t grey" style="left:1202.6px;top:333.2px;font-size:12px">Сб</div>
<div class="t grey" style="left:930.9px;top:357.5px;font-size:14px">Альбом</div>

<div class="sep" style="top:391px"></div>

<div class="t" style="left:905.4px;top:420.4px;font-size:16px">santerof</div>
<div class="t grey" style="left:905.4px;top:443.4px;font-size:14px">Имя пользователя</div>
<div class="t" style="left:905.4px;top:477.6px;font-size:16px">Рекламу не покупаю</div>
<div class="t grey" style="left:905.4px;top:499.1px;font-size:14px">О себе</div>
<div class="t" style="left:905.4px;top:540px;font-size:16px;letter-spacing:0.25px">Уведомления</div>

<!-- toggle -->
<div class="abs" style="left:1185px;top:540px;width:26px;height:14px;border-radius:7px;background:#8774e1"></div>
<div class="abs" style="left:1200px;top:537px;width:20px;height:20px;border-radius:50%;background:#212121;border:2px solid #9a8ce6"></div>

<div class="sep" style="top:578px"></div>

<div class="t purple" style="left:882px;top:607px;font-size:15px;font-weight:bold;letter-spacing:0.1px">Истории</div>
<div class="abs" style="left:882.5px;top:635px;width:63px;height:4px;border-radius:3px 3px 0 0;background:#8774e1"></div>
<div class="t grey" style="left:1060.4px;top:607px;font-size:15px;font-weight:bold;letter-spacing:0.25px">Подарки</div>


<!-- channel avatar -->
<svg style="left:845px;top:334px" width="42" height="42" viewBox="0 0 42 42">
<defs><linearGradient id="dpg" x1="0" y1="0" x2="0" y2="1"><stop offset="0" stop-color="#ff9a40"/><stop offset=".4" stop-color="#ff4a8a"/><stop offset="1" stop-color="#d020d0"/></linearGradient></defs>
<circle cx="21" cy="21" r="21" fill="#0c0a2a"/>
<path d="M10 28V17C10 13 12 11 14 10.500C13 9 14 7.500 16 8C18 6.500 21 7 23 8.500C24 6.500 27 5.500 29 6.500C28 8 29 9.500 31 10.500C33 12 33.500 15 33.500 18V28Z" fill="url(#dpg)"/>
<rect x="13.300" y="16.300" width="16.700" height="4.200" fill="#0c0a2a"/>
<rect x="9" y="23.500" width="12" height="8.800" rx="3.200" fill="#e030e0"/>
<rect x="22" y="23.500" width="13" height="8.800" rx="3.200" fill="#e030e0"/>
<circle cx="15.300" cy="27.900" r="2" fill="#0c0a2a"/><circle cx="27.700" cy="27.900" r="2" fill="#0c0a2a"/>
<circle cx="16" cy="27.200" r=".7" fill="#fff"/><circle cx="28.400" cy="27.200" r=".7" fill="#fff"/>
<path d="M20 33.500C21 34.300 22.500 34.300 23.500 33.500" stroke="#d030d0" stroke-width="1" fill="none"/>
</svg>
<!-- album thumb -->
<svg style="left:905px;top:355px" width="18" height="21" viewBox="0 0 18 21">
<rect width="18" height="21" rx="2" fill="#1e1612"/>
<path d="M2 21C2 11 4 3 9.500 2.500C15 3 16.500 11 16 21Z" fill="#3a2418"/>
<ellipse cx="10" cy="10" rx="3.400" ry="4.600" fill="#d4a084"/>
<path d="M6 15C7 17 13 17 14 15L15 21H5Z" fill="#8a5a3a"/>
<path d="M5 17.500H13V19.500H5Z" fill="#e0a840"/>
<path d="M1.500 4H5" stroke="#d07030" stroke-width="1"/>
</svg>
<!-- gift emojis -->
<svg style="left:1133px;top:606px" width="56" height="18" viewBox="0 0 56 18">
<path d="M2 7C2 4 18 4 19 7V16C19 18 2 18 2 16Z" fill="#cfcbd6"/>
<path d="M2 7C4 9 17 9 19 7" stroke="#9a94a8" stroke-width="1" fill="none"/>
<rect x="9.5" y="1.5" width="2" height="5" fill="#d8d060"/>
<path d="M5 11V16M10 11V17M15 11V16" stroke="#a8a2b8" stroke-width="1"/>
<rect x="22" y="6" width="13" height="11" fill="#f4a020"/>
<rect x="21" y="5" width="15" height="3" fill="#f08a18"/>
<rect x="27" y="5" width="3" height="12" fill="#d82020"/>
<path d="M28.5 5C25 0 21 2 24 5M28.5 5C32 0 36 2 33 5" fill="#e02020" stroke="#e02020" stroke-width="1.5"/>
<path d="M47 17C42 13 37 10 37.500 5.500C38 2 42 1.500 45 4C48 1.500 52 2 52.500 5.500C53 10 51 13 47 17Z" fill="#f048b0"/>
<path d="M37.500 8H52.500V11.500H38.500Z" fill="#f8d820"/>
<path d="M45 11L42 16M45 11L49 15" stroke="#f8d820" stroke-width="1.5"/>
</svg>
<!-- input tail -->
<svg style="left:690px;top:849px" width="12" height="12" viewBox="0 0 12 12"><path d="M0 0C0 6 3 10 9 12H0Z" fill="#212121"/></svg>
<!-- grid -->

<div class="abs" style="left:825px;top:638px;width:420px;height:235px;background:#111"></div>
<!-- grid cells -->
<div class="abs" style="left:825px;top:639px;width:139px;height:190px;background:#fdfdfd;overflow:hidden">
  <div class="abs" style="left:5.5px;top:81px;width:16px;height:16px;border-radius:50%;background:#2787f5"></div>
  <div class="t" style="left:8px;top:86px;font-size:7px;font-weight:bold;color:#fff;letter-spacing:-0.3px">VK</div>
  <div class="abs" style="left:26px;top:83.5px;width:3px;height:3px;border-radius:50%;background:#e88"></div>
  <div class="t" style="left:30.7px;top:82px;font-size:5.9px;font-weight:bold;color:#555">ВКонтакте</div>
  <div class="abs" style="left:119px;top:82px;width:14px;height:5px;background:#e4e4e4"></div>
  <div class="t" style="left:25.8px;top:89px;font-size:5.8px;font-weight:bold;color:#444">Алексей Сантеров празднует сво...</div>
  <div class="t" style="left:26px;top:96.5px;font-size:5.2px;color:#bbb">Не забудьте поздравить его</div>
  <div class="t" style="left:55.3px;top:111.5px;font-size:8px;font-weight:bold;color:#222;letter-spacing:-0.25px">да, именно это и</div>
  <div class="t" style="left:67.5px;top:121px;font-size:8px;font-weight:bold;color:#222;letter-spacing:-0.25px">праздную</div>
</div>
<div class="abs" style="left:965px;top:639px;width:140px;height:190px;background:#c9c9cb;overflow:hidden">
  <div class="abs" style="left:5px;top:11px;width:130px;height:179px;background:#ebe7e1"></div><div class="abs" style="left:0;top:125px;width:140px;height:65px;background:#ede9e4"></div>
  <svg style="left:10px;top:13px" width="86" height="114" viewBox="0 0 86 114">
    <defs><clipPath id="lc"><rect width="86" height="114" rx="4"/></clipPath></defs>
    <g clip-path="url(#lc)"><rect width="86" height="114" fill="#5a4a80"/><path d="M52 0H86V75C80 65 72 50 66 35C60 22 56 10 52 0Z" fill="#2e3e2a"/><path d="M70 5C76 10 80 30 78 50" stroke="#5a7a48" stroke-width="4" fill="none"/><path d="M62 10L70 14" stroke="#c8d0c8" stroke-width="3"/><path d="M0 40H10V114H0Z" fill="#3a3e3a"/><path d="M0 70H18V114H0Z" fill="#6a706a"/><path d="M3 72V112M8 74V112M13 76V112" stroke="#b8bcb4" stroke-width="1.2"/><path d="M0 102H22" stroke="#a8aca4" stroke-width="1.5"/><circle cx="25.5" cy="61.9" r="4.1" fill="#3a2a58"/><circle cx="49.3" cy="70.8" r="3.2" fill="#3a2a58"/><circle cx="10.9" cy="94.1" r="3.8" fill="#3a2a58"/><circle cx="25.2" cy="111.5" r="4.4" fill="#3a2a58"/><circle cx="64.4" cy="54.4" r="4.9" fill="#3a2a58"/><circle cx="19.8" cy="71.8" r="5.6" fill="#3a2a58"/><circle cx="44.0" cy="83.5" r="5.0" fill="#3a2a58"/><circle cx="14.2" cy="85.4" r="4.8" fill="#3a2a58"/><circle cx="29.6" cy="5.4" r="5.6" fill="#3a2a58"/><circle cx="40.7" cy="81.1" r="5.6" fill="#3a2a58"/><circle cx="56.4" cy="103.3" r="4.2" fill="#3a2a58"/><circle cx="62.1" cy="50.9" r="5.8" fill="#3a2a58"/><circle cx="67.1" cy="12.7" r="3.4" fill="#3a2a58"/><circle cx="24.1" cy="108.2" r="4.3" fill="#3a2a58"/><circle cx="50.7" cy="35.1" r="4.5" fill="#3a2a58"/><circle cx="35.1" cy="40.6" r="4.8" fill="#3a2a58"/><circle cx="48.0" cy="101.5" r="5.0" fill="#3a2a58"/><circle cx="70.4" cy="96.2" r="6.0" fill="#3a2a58"/><circle cx="53.6" cy="19.9" r="5.6" fill="#3a2a58"/><circle cx="72.7" cy="101.5" r="4.7" fill="#3a2a58"/><circle cx="56.4" cy="25.2" r="5.5" fill="#3a2a58"/><circle cx="47.3" cy="33.3" r="3.2" fill="#3a2a58"/><circle cx="65.5" cy="110.9" r="3.3" fill="#3a2a58"/><circle cx="62.0" cy="47.2" r="3.5" fill="#3a2a58"/><circle cx="29.1" cy="86.6" r="5.6" fill="#3a2a58"/><g transform="translate(45.4 5.0) rotate(65)" fill="#8a76c8" stroke="#5a4a88" stroke-width=".6"><ellipse rx="3.7" ry="2.6" cx="3.4"/><ellipse rx="3.7" ry="2.6" cx="-3.4"/><ellipse ry="3.7" rx="2.6" cy="3.4"/><ellipse ry="3.7" rx="2.6" cy="-3.4"/><circle r="1.2" fill="#4a3a70" stroke="none"/></g><g transform="translate(75.5 62.8) rotate(21)" fill="#9884d4" stroke="#5a4a88" stroke-width=".6"><ellipse rx="4.1" ry="2.9" cx="3.8"/><ellipse rx="4.1" ry="2.9" cx="-3.8"/><ellipse ry="4.1" rx="2.9" cy="3.8"/><ellipse ry="4.1" rx="2.9" cy="-3.8"/><circle r="1.2" fill="#4a3a70" stroke="none"/></g><g transform="translate(5.5 35.3) rotate(3)" fill="#a894e0" stroke="#5a4a88" stroke-width=".6"><ellipse rx="4.7" ry="3.3" cx="4.3"/><ellipse rx="4.7" ry="3.3" cx="-4.3"/><ellipse ry="4.7" rx="3.3" cy="4.3"/><ellipse ry="4.7" rx="3.3" cy="-4.3"/><circle r="1.2" fill="#4a3a70" stroke="none"/></g><g transform="translate(28.9 110.7) rotate(62)" fill="#8a76c8" stroke="#5a4a88" stroke-width=".6"><ellipse rx="4.1" ry="2.9" cx="3.7"/><ellipse rx="4.1" ry="2.9" cx="-3.7"/><ellipse ry="4.1" rx="2.9" cy="3.7"/><ellipse ry="4.1" rx="2.9" cy="-3.7"/><circle r="1.2" fill="#4a3a70" stroke="none"/></g><g transform="translate(76.0 35.8) rotate(34)" fill="#b4a4ea" stroke="#5a4a88" stroke-width=".6"><ellipse rx="5.2" ry="3.6" cx="4.8"/><ellipse rx="5.2" ry="3.6" cx="-4.8"/><ellipse ry="5.2" rx="3.6" cy="4.8"/><ellipse ry="5.2" rx="3.6" cy="-4.8"/><circle r="1.2" fill="#4a3a70" stroke="none"/></g><g transform="translate(33.6 99.2) rotate(61)" fill="#9884d4" stroke="#5a4a88" stroke-width=".6"><ellipse rx="5.2" ry="3.6" cx="4.7"/><ellipse rx="5.2" ry="3.6" cx="-4.7"/><ellipse ry="5.2" rx="3.6" cy="4.7"/><ellipse ry="5.2" rx="3.6" cy="-4.7"/><circle r="1.2" fill="#4a3a70" stroke="none"/></g><g transform="translate(76.7 70.7) rotate(39)" fill="#7e6ab8" stroke="#5a4a88" stroke-width=".6"><ellipse rx="4.5" ry="3.2" cx="4.1"/><ellipse rx="4.5" ry="3.2" cx="-4.1"/><ellipse ry="4.5" rx="3.2" cy="4.1"/><ellipse ry="4.5" rx="3.2" cy="-4.1"/><circle r="1.2" fill="#4a3a70" stroke="none"/></g><g transform="translate(75.2 81.6) rotate(23)" fill="#8a76c8" stroke="#5a4a88" stroke-width=".6"><ellipse rx="4.4" ry="3.1" cx="4.0"/><ellipse rx="4.4" ry="3.1" cx="-4.0"/><ellipse ry="4.4" rx="3.1" cy="4.0"/><ellipse ry="4.4" rx="3.1" cy="-4.0"/><circle r="1.2" fill="#4a3a70" stroke="none"/></g><g transform="translate(-0.7 62.5) rotate(52)" fill="#9884d4" stroke="#5a4a88" stroke-width=".6"><ellipse rx="4.3" ry="3.0" cx="4.0"/><ellipse rx="4.3" ry="3.0" cx="-4.0"/><ellipse ry="4.3" rx="3.0" cy="4.0"/><ellipse ry="4.3" rx="3.0" cy="-4.0"/><circle r="1.2" fill="#4a3a70" stroke="none"/></g><g transform="translate(46.8 42.9) rotate(57)" fill="#8a76c8" stroke="#5a4a88" stroke-width=".6"><ellipse rx="3.8" ry="2.7" cx="3.5"/><ellipse rx="3.8" ry="2.7" cx="-3.5"/><ellipse ry="3.8" rx="2.7" cy="3.5"/><ellipse ry="3.8" rx="2.7" cy="-3.5"/><circle r="1.2" fill="#4a3a70" stroke="none"/></g><g transform="translate(54.9 53.2) rotate(64)" fill="#7e6ab8" stroke="#5a4a88" stroke-width=".6"><ellipse rx="4.2" ry="3.0" cx="3.9"/><ellipse rx="4.2" ry="3.0" cx="-3.9"/><ellipse ry="4.2" rx="3.0" cy="3.9"/><ellipse ry="4.2" rx="3.0" cy="-3.9"/><circle r="1.2" fill="#4a3a70" stroke="none"/></g><g transform="translate(47.5 55.8) rotate(2)" fill="#8a76c8" stroke="#5a4a88" stroke-width=".6"><ellipse rx="5.3" ry="3.7" cx="4.9"/><ellipse rx="5.3" ry="3.7" cx="-4.9"/><ellipse ry="5.3" rx="3.7" cy="4.9"/><ellipse ry="5.3" rx="3.7" cy="-4.9"/><circle r="1.2" fill="#4a3a70" stroke="none"/></g><g transform="translate(35.6 28.6) rotate(29)" fill="#8a76c8" stroke="#5a4a88" stroke-width=".6"><ellipse rx="4.7" ry="3.3" cx="4.3"/><ellipse rx="4.7" ry="3.3" cx="-4.3"/><ellipse ry="4.7" rx="3.3" cy="4.3"/><ellipse ry="4.7" rx="3.3" cy="-4.3"/><circle r="1.2" fill="#4a3a70" stroke="none"/></g><g transform="translate(57.6 21.1) rotate(24)" fill="#b4a4ea" stroke="#5a4a88" stroke-width=".6"><ellipse rx="5.1" ry="3.6" cx="4.7"/><ellipse rx="5.1" ry="3.6" cx="-4.7"/><ellipse ry="5.1" rx="3.6" cy="4.7"/><ellipse ry="5.1" rx="3.6" cy="-4.7"/><circle r="1.2" fill="#4a3a70" stroke="none"/></g><g transform="translate(59.6 12.0) rotate(62)" fill="#a894e0" stroke="#5a4a88" stroke-width=".6"><ellipse rx="5.3" ry="3.7" cx="4.9"/><ellipse rx="5.3" ry="3.7" cx="-4.9"/><ellipse ry="5.3" rx="3.7" cy="4.9"/><ellipse ry="5.3" rx="3.7" cy="-4.9"/><circle r="1.2" fill="#4a3a70" stroke="none"/></g><g transform="translate(17.1 35.3) rotate(21)" fill="#a894e0" stroke="#5a4a88" stroke-width=".6"><ellipse rx="5.0" ry="3.5" cx="4.6"/><ellipse rx="5.0" ry="3.5" cx="-4.6"/><ellipse ry="5.0" rx="3.5" cy="4.6"/><ellipse ry="5.0" rx="3.5" cy="-4.6"/><circle r="1.2" fill="#4a3a70" stroke="none"/></g><g transform="translate(52.7 77.3) rotate(54)" fill="#8a76c8" stroke="#5a4a88" stroke-width=".6"><ellipse rx="3.8" ry="2.6" cx="3.5"/><ellipse rx="3.8" ry="2.6" cx="-3.5"/><ellipse ry="3.8" rx="2.6" cy="3.5"/><ellipse ry="3.8" rx="2.6" cy="-3.5"/><circle r="1.2" fill="#4a3a70" stroke="none"/></g><g transform="translate(18.5 76.9) rotate(86)" fill="#9884d4" stroke="#5a4a88" stroke-width=".6"><ellipse rx="5.1" ry="3.5" cx="4.6"/><ellipse rx="5.1" ry="3.5" cx="-4.6"/><ellipse ry="5.1" rx="3.5" cy="4.6"/><ellipse ry="5.1" rx="3.5" cy="-4.6"/><circle r="1.2" fill="#4a3a70" stroke="none"/></g><g transform="translate(51.5 38.4) rotate(41)" fill="#a894e0" stroke="#5a4a88" stroke-width=".6"><ellipse rx="5.2" ry="3.6" cx="4.8"/><ellipse rx="5.2" ry="3.6" cx="-4.8"/><ellipse ry="5.2" rx="3.6" cy="4.8"/><ellipse ry="5.2" rx="3.6" cy="-4.8"/><circle r="1.2" fill="#4a3a70" stroke="none"/></g><g transform="translate(6.2 89.7) rotate(28)" fill="#9c8ad8" stroke="#5a4a88" stroke-width=".6"><ellipse rx="5.3" ry="3.7" cx="4.9"/><ellipse rx="5.3" ry="3.7" cx="-4.9"/><ellipse ry="5.3" rx="3.7" cy="4.9"/><ellipse ry="5.3" rx="3.7" cy="-4.9"/><circle r="1.2" fill="#4a3a70" stroke="none"/></g><g transform="translate(22.6 20.9) rotate(58)" fill="#9c8ad8" stroke="#5a4a88" stroke-width=".6"><ellipse rx="5.1" ry="3.5" cx="4.6"/><ellipse rx="5.1" ry="3.5" cx="-4.6"/><ellipse ry="5.1" rx="3.5" cy="4.6"/><ellipse ry="5.1" rx="3.5" cy="-4.6"/><circle r="1.2" fill="#4a3a70" stroke="none"/></g><g transform="translate(9.3 39.4) rotate(71)" fill="#8a76c8" stroke="#5a4a88" stroke-width=".6"><ellipse rx="4.1" ry="2.9" cx="3.8"/><ellipse rx="4.1" ry="2.9" cx="-3.8"/><ellipse ry="4.1" rx="2.9" cy="3.8"/><ellipse ry="4.1" rx="2.9" cy="-3.8"/><circle r="1.2" fill="#4a3a70" stroke="none"/></g><g transform="translate(51.1 53.0) rotate(51)" fill="#9884d4" stroke="#5a4a88" stroke-width=".6"><ellipse rx="4.1" ry="2.9" cx="3.8"/><ellipse rx="4.1" ry="2.9" cx="-3.8"/><ellipse ry="4.1" rx="2.9" cy="3.8"/><ellipse ry="4.1" rx="2.9" cy="-3.8"/><circle r="1.2" fill="#4a3a70" stroke="none"/></g><g transform="translate(19.0 104.9) rotate(85)" fill="#9c8ad8" stroke="#5a4a88" stroke-width=".6"><ellipse rx="3.6" ry="2.5" cx="3.3"/><ellipse rx="3.6" ry="2.5" cx="-3.3"/><ellipse ry="3.6" rx="2.5" cy="3.3"/><ellipse ry="3.6" rx="2.5" cy="-3.3"/><circle r="1.2" fill="#4a3a70" stroke="none"/></g><g transform="translate(37.9 112.5) rotate(83)" fill="#a894e0" stroke="#5a4a88" stroke-width=".6"><ellipse rx="5.3" ry="3.7" cx="4.9"/><ellipse rx="5.3" ry="3.7" cx="-4.9"/><ellipse ry="5.3" rx="3.7" cy="4.9"/><ellipse ry="5.3" rx="3.7" cy="-4.9"/><circle r="1.2" fill="#4a3a70" stroke="none"/></g><g transform="translate(35.4 3.7) rotate(67)" fill="#8a76c8" stroke="#5a4a88" stroke-width=".6"><ellipse rx="5.0" ry="3.5" cx="4.5"/><ellipse rx="5.0" ry="3.5" cx="-4.5"/><ellipse ry="5.0" rx="3.5" cy="4.5"/><ellipse ry="5.0" rx="3.5" cy="-4.5"/><circle r="1.2" fill="#4a3a70" stroke="none"/></g><g transform="translate(72.8 62.0) rotate(77)" fill="#8a76c8" stroke="#5a4a88" stroke-width=".6"><ellipse rx="5.2" ry="3.6" cx="4.7"/><ellipse rx="5.2" ry="3.6" cx="-4.7"/><ellipse ry="5.2" rx="3.6" cy="4.7"/><ellipse ry="5.2" rx="3.6" cy="-4.7"/><circle r="1.2" fill="#4a3a70" stroke="none"/></g><g transform="translate(20.9 13.7) rotate(72)" fill="#9c8ad8" stroke="#5a4a88" stroke-width=".6"><ellipse rx="3.7" ry="2.6" cx="3.4"/><ellipse rx="3.7" ry="2.6" cx="-3.4"/><ellipse ry="3.7" rx="2.6" cy="3.4"/><ellipse ry="3.7" rx="2.6" cy="-3.4"/><circle r="1.2" fill="#4a3a70" stroke="none"/></g><g transform="translate(67.7 105.3) rotate(52)" fill="#9884d4" stroke="#5a4a88" stroke-width=".6"><ellipse rx="5.2" ry="3.7" cx="4.8"/><ellipse rx="5.2" ry="3.7" cx="-4.8"/><ellipse ry="5.2" rx="3.7" cy="4.8"/><ellipse ry="5.2" rx="3.7" cy="-4.8"/><circle r="1.2" fill="#4a3a70" stroke="none"/></g><g transform="translate(8.1 54.8) rotate(22)" fill="#9884d4" stroke="#5a4a88" stroke-width=".6"><ellipse rx="4.5" ry="3.2" cx="4.1"/><ellipse rx="4.5" ry="3.2" cx="-4.1"/><ellipse ry="4.5" rx="3.2" cy="4.1"/><ellipse ry="4.5" rx="3.2" cy="-4.1"/><circle r="1.2" fill="#4a3a70" stroke="none"/></g><g transform="translate(32.9 59.8) rotate(55)" fill="#8a76c8" stroke="#5a4a88" stroke-width=".6"><ellipse rx="5.3" ry="3.7" cx="4.8"/><ellipse rx="5.3" ry="3.7" cx="-4.8"/><ellipse ry="5.3" rx="3.7" cy="4.8"/><ellipse ry="5.3" rx="3.7" cy="-4.8"/><circle r="1.2" fill="#4a3a70" stroke="none"/></g><g transform="translate(71.2 14.3) rotate(73)" fill="#9884d4" stroke="#5a4a88" stroke-width=".6"><ellipse rx="4.6" ry="3.2" cx="4.2"/><ellipse rx="4.6" ry="3.2" cx="-4.2"/><ellipse ry="4.6" rx="3.2" cy="4.2"/><ellipse ry="4.6" rx="3.2" cy="-4.2"/><circle r="1.2" fill="#4a3a70" stroke="none"/></g><g transform="translate(14.8 40.1) rotate(74)" fill="#a894e0" stroke="#5a4a88" stroke-width=".6"><ellipse rx="4.6" ry="3.2" cx="4.2"/><ellipse rx="4.6" ry="3.2" cx="-4.2"/><ellipse ry="4.6" rx="3.2" cy="4.2"/><ellipse ry="4.6" rx="3.2" cy="-4.2"/><circle r="1.2" fill="#4a3a70" stroke="none"/></g><g transform="translate(21.7 27.3) rotate(12)" fill="#9884d4" stroke="#5a4a88" stroke-width=".6"><ellipse rx="5.2" ry="3.6" cx="4.8"/><ellipse rx="5.2" ry="3.6" cx="-4.8"/><ellipse ry="5.2" rx="3.6" cy="4.8"/><ellipse ry="5.2" rx="3.6" cy="-4.8"/><circle r="1.2" fill="#4a3a70" stroke="none"/></g><g transform="translate(45.9 55.6) rotate(68)" fill="#a894e0" stroke="#5a4a88" stroke-width=".6"><ellipse rx="4.3" ry="3.0" cx="4.0"/><ellipse rx="4.3" ry="3.0" cx="-4.0"/><ellipse ry="4.3" rx="3.0" cy="4.0"/><ellipse ry="4.3" rx="3.0" cy="-4.0"/><circle r="1.2" fill="#4a3a70" stroke="none"/></g><g transform="translate(41.2 30.6) rotate(43)" fill="#9884d4" stroke="#5a4a88" stroke-width=".6"><ellipse rx="4.4" ry="3.1" cx="4.0"/><ellipse rx="4.4" ry="3.1" cx="-4.0"/><ellipse ry="4.4" rx="3.1" cy="4.0"/><ellipse ry="4.4" rx="3.1" cy="-4.0"/><circle r="1.2" fill="#4a3a70" stroke="none"/></g><g transform="translate(60.8 97.7) rotate(4)" fill="#b4a4ea" stroke="#5a4a88" stroke-width=".6"><ellipse rx="3.7" ry="2.6" cx="3.4"/><ellipse rx="3.7" ry="2.6" cx="-3.4"/><ellipse ry="3.7" rx="2.6" cy="3.4"/><ellipse ry="3.7" rx="2.6" cy="-3.4"/><circle r="1.2" fill="#4a3a70" stroke="none"/></g><g transform="translate(63.8 111.1) rotate(45)" fill="#8a76c8" stroke="#5a4a88" stroke-width=".6"><ellipse rx="3.8" ry="2.6" cx="3.4"/><ellipse rx="3.8" ry="2.6" cx="-3.4"/><ellipse ry="3.8" rx="2.6" cy="3.4"/><ellipse ry="3.8" rx="2.6" cy="-3.4"/><circle r="1.2" fill="#4a3a70" stroke="none"/></g><g transform="translate(8.1 17.9) rotate(35)" fill="#8a76c8" stroke="#5a4a88" stroke-width=".6"><ellipse rx="4.3" ry="3.0" cx="3.9"/><ellipse rx="4.3" ry="3.0" cx="-3.9"/><ellipse ry="4.3" rx="3.0" cy="3.9"/><ellipse ry="4.3" rx="3.0" cy="-3.9"/><circle r="1.2" fill="#4a3a70" stroke="none"/></g><g transform="translate(14.2 41.1) rotate(11)" fill="#9c8ad8" stroke="#5a4a88" stroke-width=".6"><ellipse rx="4.2" ry="2.9" cx="3.8"/><ellipse rx="4.2" ry="2.9" cx="-3.8"/><ellipse ry="4.2" rx="2.9" cy="3.8"/><ellipse ry="4.2" rx="2.9" cy="-3.8"/><circle r="1.2" fill="#4a3a70" stroke="none"/></g><g transform="translate(51.5 0.4) rotate(51)" fill="#9884d4" stroke="#5a4a88" stroke-width=".6"><ellipse rx="5.0" ry="3.5" cx="4.6"/><ellipse rx="5.0" ry="3.5" cx="-4.6"/><ellipse ry="5.0" rx="3.5" cy="4.6"/><ellipse ry="5.0" rx="3.5" cy="-4.6"/><circle r="1.2" fill="#4a3a70" stroke="none"/></g><g transform="translate(48.1 42.6) rotate(34)" fill="#9884d4" stroke="#5a4a88" stroke-width=".6"><ellipse rx="5.0" ry="3.5" cx="4.6"/><ellipse rx="5.0" ry="3.5" cx="-4.6"/><ellipse ry="5.0" rx="3.5" cy="4.6"/><ellipse ry="5.0" rx="3.5" cy="-4.6"/><circle r="1.2" fill="#4a3a70" stroke="none"/></g><g transform="translate(34.9 71.0) rotate(45)" fill="#7e6ab8" stroke="#5a4a88" stroke-width=".6"><ellipse rx="4.3" ry="3.0" cx="3.9"/><ellipse rx="4.3" ry="3.0" cx="-3.9"/><ellipse ry="4.3" rx="3.0" cy="3.9"/><ellipse ry="4.3" rx="3.0" cy="-3.9"/><circle r="1.2" fill="#4a3a70" stroke="none"/></g><g transform="translate(75.3 35.9) rotate(2)" fill="#a894e0" stroke="#5a4a88" stroke-width=".6"><ellipse rx="4.4" ry="3.0" cx="4.0"/><ellipse rx="4.4" ry="3.0" cx="-4.0"/><ellipse ry="4.4" rx="3.0" cy="4.0"/><ellipse ry="4.4" rx="3.0" cy="-4.0"/><circle r="1.2" fill="#4a3a70" stroke="none"/></g><g transform="translate(56.5 61.1) rotate(38)" fill="#b4a4ea" stroke="#5a4a88" stroke-width=".6"><ellipse rx="3.7" ry="2.6" cx="3.4"/><ellipse rx="3.7" ry="2.6" cx="-3.4"/><ellipse ry="3.7" rx="2.6" cy="3.4"/><ellipse ry="3.7" rx="2.6" cy="-3.4"/><circle r="1.2" fill="#4a3a70" stroke="none"/></g><g transform="translate(5.7 14.9) rotate(87)" fill="#9c8ad8" stroke="#5a4a88" stroke-width=".6"><ellipse rx="4.2" ry="2.9" cx="3.8"/><ellipse rx="4.2" ry="2.9" cx="-3.8"/><ellipse ry="4.2" rx="2.9" cy="3.8"/><ellipse ry="4.2" rx="2.9" cy="-3.8"/><circle r="1.2" fill="#4a3a70" stroke="none"/></g><g transform="translate(23.4 90.2) rotate(11)" fill="#7e6ab8" stroke="#5a4a88" stroke-width=".6"><ellipse rx="4.4" ry="3.1" cx="4.1"/><ellipse rx="4.4" ry="3.1" cx="-4.1"/><ellipse ry="4.4" rx="3.1" cy="4.1"/><ellipse ry="4.4" rx="3.1" cy="-4.1"/><circle r="1.2" fill="#4a3a70" stroke="none"/></g><g transform="translate(72.0 75.5) rotate(60)" fill="#7e6ab8" stroke="#5a4a88" stroke-width=".6"><ellipse rx="5.0" ry="3.5" cx="4.6"/><ellipse rx="5.0" ry="3.5" cx="-4.6"/><ellipse ry="5.0" rx="3.5" cy="4.6"/><ellipse ry="5.0" rx="3.5" cy="-4.6"/><circle r="1.2" fill="#4a3a70" stroke="none"/></g><g transform="translate(41.8 36.3) rotate(64)" fill="#b4a4ea" stroke="#5a4a88" stroke-width=".6"><ellipse rx="5.1" ry="3.5" cx="4.6"/><ellipse rx="5.1" ry="3.5" cx="-4.6"/><ellipse ry="5.1" rx="3.5" cy="4.6"/><ellipse ry="5.1" rx="3.5" cy="-4.6"/><circle r="1.2" fill="#4a3a70" stroke="none"/></g><g transform="translate(57.9 16.4) rotate(8)" fill="#9884d4" stroke="#5a4a88" stroke-width=".6"><ellipse rx="3.7" ry="2.6" cx="3.4"/><ellipse rx="3.7" ry="2.6" cx="-3.4"/><ellipse ry="3.7" rx="2.6" cy="3.4"/><ellipse ry="3.7" rx="2.6" cy="-3.4"/><circle r="1.2" fill="#4a3a70" stroke="none"/></g><g transform="translate(30.6 75.1) rotate(31)" fill="#9884d4" stroke="#5a4a88" stroke-width=".6"><ellipse rx="5.1" ry="3.6" cx="4.7"/><ellipse rx="5.1" ry="3.6" cx="-4.7"/><ellipse ry="5.1" rx="3.6" cy="4.7"/><ellipse ry="5.1" rx="3.6" cy="-4.7"/><circle r="1.2" fill="#4a3a70" stroke="none"/></g><g transform="translate(14.3 2.9) rotate(63)" fill="#8a76c8" stroke="#5a4a88" stroke-width=".6"><ellipse rx="4.5" ry="3.1" cx="4.1"/><ellipse rx="4.5" ry="3.1" cx="-4.1"/><ellipse ry="4.5" rx="3.1" cy="4.1"/><ellipse ry="4.5" rx="3.1" cy="-4.1"/><circle r="1.2" fill="#4a3a70" stroke="none"/></g><g transform="translate(65.2 66.0) rotate(69)" fill="#9c8ad8" stroke="#5a4a88" stroke-width=".6"><ellipse rx="3.7" ry="2.6" cx="3.4"/><ellipse rx="3.7" ry="2.6" cx="-3.4"/><ellipse ry="3.7" rx="2.6" cy="3.4"/><ellipse ry="3.7" rx="2.6" cy="-3.4"/><circle r="1.2" fill="#4a3a70" stroke="none"/></g><g transform="translate(18.2 60.3) rotate(9)" fill="#9c8ad8" stroke="#5a4a88" stroke-width=".6"><ellipse rx="4.6" ry="3.2" cx="4.2"/><ellipse rx="4.6" ry="3.2" cx="-4.2"/><ellipse ry="4.6" rx="3.2" cy="4.2"/><ellipse ry="4.6" rx="3.2" cy="-4.2"/><circle r="1.2" fill="#4a3a70" stroke="none"/></g><g transform="translate(26.9 7.0) rotate(75)" fill="#a894e0" stroke="#5a4a88" stroke-width=".6"><ellipse rx="4.6" ry="3.2" cx="4.2"/><ellipse rx="4.6" ry="3.2" cx="-4.2"/><ellipse ry="4.6" rx="3.2" cy="4.2"/><ellipse ry="4.6" rx="3.2" cy="-4.2"/><circle r="1.2" fill="#4a3a70" stroke="none"/></g><g transform="translate(50.8 113.8) rotate(63)" fill="#b4a4ea" stroke="#5a4a88" stroke-width=".6"><ellipse rx="4.4" ry="3.1" cx="4.0"/><ellipse rx="4.4" ry="3.1" cx="-4.0"/><ellipse ry="4.4" rx="3.1" cy="4.0"/><ellipse ry="4.4" rx="3.1" cy="-4.0"/><circle r="1.2" fill="#4a3a70" stroke="none"/></g><g transform="translate(46.7 28.8) rotate(50)" fill="#9884d4" stroke="#5a4a88" stroke-width=".6"><ellipse rx="5.3" ry="3.7" cx="4.8"/><ellipse rx="5.3" ry="3.7" cx="-4.8"/><ellipse ry="5.3" rx="3.7" cy="4.8"/><ellipse ry="5.3" rx="3.7" cy="-4.8"/><circle r="1.2" fill="#4a3a70" stroke="none"/></g><g transform="translate(17.7 42.8) rotate(76)" fill="#a894e0" stroke="#5a4a88" stroke-width=".6"><ellipse rx="5.3" ry="3.7" cx="4.8"/><ellipse rx="5.3" ry="3.7" cx="-4.8"/><ellipse ry="5.3" rx="3.7" cy="4.8"/><ellipse ry="5.3" rx="3.7" cy="-4.8"/><circle r="1.2" fill="#4a3a70" stroke="none"/></g><g transform="translate(45.3 47.3) rotate(83)" fill="#7e6ab8" stroke="#5a4a88" stroke-width=".6"><ellipse rx="4.6" ry="3.3" cx="4.3"/><ellipse rx="4.6" ry="3.3" cx="-4.3"/><ellipse ry="4.6" rx="3.3" cy="4.3"/><ellipse ry="4.6" rx="3.3" cy="-4.3"/><circle r="1.2" fill="#4a3a70" stroke="none"/></g><g transform="translate(51.9 55.1) rotate(13)" fill="#9884d4" stroke="#5a4a88" stroke-width=".6"><ellipse rx="5.2" ry="3.7" cx="4.8"/><ellipse rx="5.2" ry="3.7" cx="-4.8"/><ellipse ry="5.2" rx="3.7" cy="4.8"/><ellipse ry="5.2" rx="3.7" cy="-4.8"/><circle r="1.2" fill="#4a3a70" stroke="none"/></g><g transform="translate(38.6 56.8) rotate(86)" fill="#9c8ad8" stroke="#5a4a88" stroke-width=".6"><ellipse rx="4.9" ry="3.4" cx="4.5"/><ellipse rx="4.9" ry="3.4" cx="-4.5"/><ellipse ry="4.9" rx="3.4" cy="4.5"/><ellipse ry="4.9" rx="3.4" cy="-4.5"/><circle r="1.2" fill="#4a3a70" stroke="none"/></g><g transform="translate(16.2 82.0) rotate(18)" fill="#9c8ad8" stroke="#5a4a88" stroke-width=".6"><ellipse rx="4.1" ry="2.9" cx="3.7"/><ellipse rx="4.1" ry="2.9" cx="-3.7"/><ellipse ry="4.1" rx="2.9" cy="3.7"/><ellipse ry="4.1" rx="2.9" cy="-3.7"/><circle r="1.2" fill="#4a3a70" stroke="none"/></g><g transform="translate(76.6 58.8) rotate(48)" fill="#8a76c8" stroke="#5a4a88" stroke-width=".6"><ellipse rx="5.1" ry="3.6" cx="4.7"/><ellipse rx="5.1" ry="3.6" cx="-4.7"/><ellipse ry="5.1" rx="3.6" cy="4.7"/><ellipse ry="5.1" rx="3.6" cy="-4.7"/><circle r="1.2" fill="#4a3a70" stroke="none"/></g><g transform="translate(69.3 76.5) rotate(53)" fill="#8a76c8" stroke="#5a4a88" stroke-width=".6"><ellipse rx="4.7" ry="3.3" cx="4.3"/><ellipse rx="4.7" ry="3.3" cx="-4.3"/><ellipse ry="4.7" rx="3.3" cy="4.3"/><ellipse ry="4.7" rx="3.3" cy="-4.3"/><circle r="1.2" fill="#4a3a70" stroke="none"/></g><g transform="translate(28.4 101.4) rotate(72)" fill="#a894e0" stroke="#5a4a88" stroke-width=".6"><ellipse rx="4.1" ry="2.9" cx="3.7"/><ellipse rx="4.1" ry="2.9" cx="-3.7"/><ellipse ry="4.1" rx="2.9" cy="3.7"/><ellipse ry="4.1" rx="2.9" cy="-3.7"/><circle r="1.2" fill="#4a3a70" stroke="none"/></g><g transform="translate(28.6 19.6) rotate(70)" fill="#a894e0" stroke="#5a4a88" stroke-width=".6"><ellipse rx="4.2" ry="2.9" cx="3.8"/><ellipse rx="4.2" ry="2.9" cx="-3.8"/><ellipse ry="4.2" rx="2.9" cy="3.8"/><ellipse ry="4.2" rx="2.9" cy="-3.8"/><circle r="1.2" fill="#4a3a70" stroke="none"/></g><g transform="translate(56.1 47.7) rotate(19)" fill="#9c8ad8" stroke="#5a4a88" stroke-width=".6"><ellipse rx="4.9" ry="3.4" cx="4.5"/><ellipse rx="4.9" ry="3.4" cx="-4.5"/><ellipse ry="4.9" rx="3.4" cy="4.5"/><ellipse ry="4.9" rx="3.4" cy="-4.5"/><circle r="1.2" fill="#4a3a70" stroke="none"/></g><g transform="translate(64.5 95.1) rotate(43)" fill="#7e6ab8" stroke="#5a4a88" stroke-width=".6"><ellipse rx="4.6" ry="3.2" cx="4.2"/><ellipse rx="4.6" ry="3.2" cx="-4.2"/><ellipse ry="4.6" rx="3.2" cy="4.2"/><ellipse ry="4.6" rx="3.2" cy="-4.2"/><circle r="1.2" fill="#4a3a70" stroke="none"/></g><g transform="translate(67.6 8.3) rotate(79)" fill="#9884d4" stroke="#5a4a88" stroke-width=".6"><ellipse rx="5.0" ry="3.5" cx="4.6"/><ellipse rx="5.0" ry="3.5" cx="-4.6"/><ellipse ry="5.0" rx="3.5" cy="4.6"/><ellipse ry="5.0" rx="3.5" cy="-4.6"/><circle r="1.2" fill="#4a3a70" stroke="none"/></g><g transform="translate(17.2 53.3) rotate(65)" fill="#7e6ab8" stroke="#5a4a88" stroke-width=".6"><ellipse rx="4.0" ry="2.8" cx="3.7"/><ellipse rx="4.0" ry="2.8" cx="-3.7"/><ellipse ry="4.0" rx="2.8" cy="3.7"/><ellipse ry="4.0" rx="2.8" cy="-3.7"/><circle r="1.2" fill="#4a3a70" stroke="none"/></g><g transform="translate(19.9 7.9) rotate(80)" fill="#8a76c8" stroke="#5a4a88" stroke-width=".6"><ellipse rx="4.1" ry="2.8" cx="3.7"/><ellipse rx="4.1" ry="2.8" cx="-3.7"/><ellipse ry="4.1" rx="2.8" cy="3.7"/><ellipse ry="4.1" rx="2.8" cy="-3.7"/><circle r="1.2" fill="#4a3a70" stroke="none"/></g><g transform="translate(47.1 15.7) rotate(3)" fill="#8a76c8" stroke="#5a4a88" stroke-width=".6"><ellipse rx="4.8" ry="3.4" cx="4.4"/><ellipse rx="4.8" ry="3.4" cx="-4.4"/><ellipse ry="4.8" rx="3.4" cy="4.4"/><ellipse ry="4.8" rx="3.4" cy="-4.4"/><circle r="1.2" fill="#4a3a70" stroke="none"/></g><g transform="translate(5.8 19.3) rotate(8)" fill="#9884d4" stroke="#5a4a88" stroke-width=".6"><ellipse rx="3.9" ry="2.8" cx="3.6"/><ellipse rx="3.9" ry="2.8" cx="-3.6"/><ellipse ry="3.9" rx="2.8" cy="3.6"/><ellipse ry="3.9" rx="2.8" cy="-3.6"/><circle r="1.2" fill="#4a3a70" stroke="none"/></g><g transform="translate(22.3 13.4) rotate(3)" fill="#b4a4ea" stroke="#5a4a88" stroke-width=".6"><ellipse rx="5.2" ry="3.7" cx="4.8"/><ellipse rx="5.2" ry="3.7" cx="-4.8"/><ellipse ry="5.2" rx="3.7" cy="4.8"/><ellipse ry="5.2" rx="3.7" cy="-4.8"/><circle r="1.2" fill="#4a3a70" stroke="none"/></g><g transform="translate(54.9 66.2) rotate(30)" fill="#b4a4ea" stroke="#5a4a88" stroke-width=".6"><ellipse rx="3.6" ry="2.5" cx="3.3"/><ellipse rx="3.6" ry="2.5" cx="-3.3"/><ellipse ry="3.6" rx="2.5" cy="3.3"/><ellipse ry="3.6" rx="2.5" cy="-3.3"/><circle r="1.2" fill="#4a3a70" stroke="none"/></g><g transform="translate(4.8 43.3) rotate(67)" fill="#b4a4ea" stroke="#5a4a88" stroke-width=".6"><ellipse rx="4.8" ry="3.3" cx="4.4"/><ellipse rx="4.8" ry="3.3" cx="-4.4"/><ellipse ry="4.8" rx="3.3" cy="4.4"/><ellipse ry="4.8" rx="3.3" cy="-4.4"/><circle r="1.2" fill="#4a3a70" stroke="none"/></g><g transform="translate(43.2 44.6) rotate(25)" fill="#7e6ab8" stroke="#5a4a88" stroke-width=".6"><ellipse rx="3.8" ry="2.7" cx="3.5"/><ellipse rx="3.8" ry="2.7" cx="-3.5"/><ellipse ry="3.8" rx="2.7" cy="3.5"/><ellipse ry="3.8" rx="2.7" cy="-3.5"/><circle r="1.2" fill="#4a3a70" stroke="none"/></g><g transform="translate(34.6 49.3) rotate(23)" fill="#9c8ad8" stroke="#5a4a88" stroke-width=".6"><ellipse rx="4.5" ry="3.2" cx="4.2"/><ellipse rx="4.5" ry="3.2" cx="-4.2"/><ellipse ry="4.5" rx="3.2" cy="4.2"/><ellipse ry="4.5" rx="3.2" cy="-4.2"/><circle r="1.2" fill="#4a3a70" stroke="none"/></g><g transform="translate(33.7 107.3) rotate(68)" fill="#8a76c8" stroke="#5a4a88" stroke-width=".6"><ellipse rx="5.0" ry="3.5" cx="4.6"/><ellipse rx="5.0" ry="3.5" cx="-4.6"/><ellipse ry="5.0" rx="3.5" cy="4.6"/><ellipse ry="5.0" rx="3.5" cy="-4.6"/><circle r="1.2" fill="#4a3a70" stroke="none"/></g><g transform="translate(54.4 75.6) rotate(74)" fill="#9884d4" stroke="#5a4a88" stroke-width=".6"><ellipse rx="5.3" ry="3.7" cx="4.9"/><ellipse rx="5.3" ry="3.7" cx="-4.9"/><ellipse ry="5.3" rx="3.7" cy="4.9"/><ellipse ry="5.3" rx="3.7" cy="-4.9"/><circle r="1.2" fill="#4a3a70" stroke="none"/></g></g>
  </svg>
  <div class="abs" style="left:100px;top:65px;width:9px;height:9px;border-radius:50%;background:#bcbcbc"></div>
  <div class="abs" style="left:10px;top:128px;width:97px;height:16px;border-radius:4px;background:#fbfbfa"></div>
  <div class="t" style="left:13px;top:133px;font-size:5.5px;color:#555">Подарили у него вот веточка сирени.</div><div class="t" style="left:91px;top:139px;font-size:4px;color:#999">09:31</div>
  <div class="t" style="left:11px;top:150px;font-size:10px;color:#777">+</div>
  <div class="abs" style="left:18px;top:150px;width:89px;height:9px;border-radius:5px;background:#fdfdfd"></div>
  <div class="abs" style="left:117px;top:151px;width:8px;height:6px;border:1px solid #666;border-radius:1px"></div>
  <div class="abs" style="left:129px;top:150px;width:3px;height:7px;background:#666;border-radius:2px"></div>
  <div class="t" style="left:35px;top:168px;font-size:8.5px;font-weight:bold;color:#222">Лучше и не скажешь..</div>
</div>
<div class="abs" style="left:1106px;top:639px;width:139px;height:190px;overflow:hidden;background:#5b5955">
  <svg style="left:0;top:0" width="139" height="189" viewBox="0 0 139 189">
    <defs><linearGradient id="csky" x1="0" y1="0" x2="0" y2="1"><stop offset="0" stop-color="#a3b6c8"/><stop offset="0.2" stop-color="#98b0c8"/><stop offset="1" stop-color="#d9dcdc"/></linearGradient>
    <linearGradient id="road" x1="0" y1="0" x2="0" y2="1"><stop offset="0" stop-color="#6e6b66"/><stop offset="1" stop-color="#55524e"/></linearGradient></defs>
    <rect width="139" height="9" fill="#a2a6ac"/>
    <rect y="9" width="139" height="100" fill="url(#csky)"/>
    <path d="M93 29L139 18V100H93Z" fill="#c2bdb3"/>
    <path d="M100 27V100M106 25.500V100M112 24V100M118 22.600V100M124 21.200V100M130 19.800V100M136 18.500V100" stroke="#aaa59c" stroke-width=".8"/>
    <path d="M93 98H139V110H93Z" fill="#c6a64e"/>
    <rect y="108" width="139" height="82" fill="url(#road)"/>
    <path d="M0 181L36 143L38 146L3 186Z" fill="#8c8160"/>
    <path d="M0 43C30 36 55 30 86 29L96 34C110 38 122 50 127 70L130 95C131 108 128 118 120 120L60 140L0 148Z" fill="#121216"/>
    <path d="M14 42C40 35 70 30 86 30L92 40C70 42 40 44 14 46Z" fill="#263244"/>
    <path d="M0 49L55 50L66 56L56 62L0 64Z" fill="#6a6c70"/>
    <path d="M0 52L50 52L58 56L50 60L0 61Z" fill="#b4b2aa"/>
    <path d="M93 39C96 35 112 34 116 40C117 46 110 50 100 50C95 50 92 45 93 39Z" fill="#0a0a0c"/>
    <path d="M0 64L50 62L60 72L55 120L0 125Z" fill="#08080a"/>
    <path d="M0 118L48 115L50 136L0 140Z" fill="#353b44"/>
    <path d="M62 120C62 96 68 84 80 84C92 84 96 98 96 120C96 142 90 155 79 155C68 155 62 142 62 120Z" fill="#0a0a0c"/>
    <path d="M66 120C66 100 71 90 80 90C89 90 92 102 92 120C92 138 88 150 79 150C70 150 66 138 66 120Z" fill="none" stroke="#2a2a2e" stroke-width="1.5" stroke-dasharray="1 2"/>
    <path d="M114 104C114 92 117 85 121 85C126 85 128 94 128 104C128 114 125 120 121 120C117 120 114 114 114 104Z" fill="#0a0a0c"/>
    <path d="M40 82L46 82L50 118L45 118Z" fill="#c8262a"/>
    <path d="M96 112L124 104L124 107L96 116Z" fill="#b02426"/>
  </svg>
</div>
<div class="abs" style="left:825px;top:830px;width:139px;height:43px;background:#f4f2ef;overflow:hidden">
  <div class="abs" style="left:0;top:0;width:139px;height:25px;background:#b3aba0"></div>
  <div class="abs" style="left:22px;top:26px;width:96px;height:60px;border-radius:50%;background:#c8bcae"></div>
  <div class="abs" style="left:22px;top:38px;width:14px;height:10px;background:#555"></div>
  <div class="t" style="left:27px;top:-2.5px;font-size:10.5px;color:#fff">не выйду из дома</div>
  <div class="t" style="left:30px;top:11px;font-size:10.5px;color:#fff">пока не выучу</div>
  <div class="abs" style="left:101px;top:12px;width:12px;height:12px;border-radius:50%;background:#d8c020"></div>
  <div class="abs" style="left:5px;top:4.5px;width:34px;height:17px;border-radius:6px;background:rgba(90,85,80,0.75)"></div>
  <div class="t" style="left:9.5px;top:6.5px;font-size:12px;color:#fff">0:09</div>
</div>
<div class="abs" style="left:965px;top:830px;width:140px;height:43px;background:#6d6d6d;overflow:hidden">
  <div class="abs" style="left:0;top:26px;width:140px;height:18px;background:#888"></div>
  <div class="abs" style="left:5px;top:30px;width:60px;height:14px;border-radius:8px 8px 0 0;background:#9a9a9a"></div>
  <div class="abs" style="left:70px;top:28px;width:70px;height:16px;background:#555"></div>
  <div class="abs" style="left:5.5px;top:4.5px;width:33px;height:16px;border-radius:6px;background:rgba(60,60,66,0.8)"></div>
  <div class="t" style="left:10px;top:6.5px;font-size:12px;color:#fff">0:15</div>
</div>
<div class="abs" style="left:1106px;top:830px;width:139px;height:43px;background:linear-gradient(#8e9196,#82858a)"></div>


<!-- input -->
<div class="abs" style="left:54px;top:807px;width:640px;height:54px;border-radius:14px 14px 0 14px;background:#212121"></div>
<div class="t" style="left:108.8px;top:825.9px;font-size:16px;color:#a8a8a8">Сообщение</div>
<div class="abs" style="left:702px;top:807px;width:54px;height:54px;border-radius:50%;background:#8774e1"></div>

<!-- bubble -->
<div class="abs" style="left:290px;top:278px;width:230px;height:321px;border-radius:19px;background:rgba(64,29,77,0.78)"></div>
<div class="t" style="left:314.8px;top:292.1px;font-size:15px;font-weight:bold">Здесь пока ничего нет…</div>
<div class="t" style="left:311.6px;top:315.9px;font-size:15px;-webkit-text-stroke:0.3px #fff">Отправьте сообщение или</div>
<div class="t" style="left:315.2px;top:334.3px;font-size:15px;letter-spacing:0.35px;-webkit-text-stroke:0.3px #fff">нажмите на приветствие</div>
<div class="t" style="left:386.3px;top:353.5px;font-size:15px;-webkit-text-stroke:0.3px #fff">ниже.</div>

<svg style="left:170px;top:13.3px" width="17.5" height="16.5" viewBox="0 0 16 16" preserveAspectRatio="none"><use href="#emo"/></svg>
<svg style="left:1062.5px;top:214.5px" width="18" height="18" viewBox="0 0 16 16"><use href="#emo"/></svg>
<!-- @ -->
<svg style="left:849px;top:427px" width="24" height="24" viewBox="0 0 24 24"><circle cx="12" cy="12" r="4.2" fill="none" stroke="#aaaaaa" stroke-width="2"/><path d="M16.2 9.5V13.6A2.6 2.6 0 0 0 21.4 13.6V12A9.6 9.6 0 1 0 16.500 20.600" fill="none" stroke="#aaaaaa" stroke-width="2" stroke-linecap="round"/></svg>
<!-- i -->
<svg style="left:849px;top:483px" width="24" height="24" viewBox="0 0 24 24"><circle cx="12" cy="12.2" r="10.1" fill="none" stroke="#aaaaaa" stroke-width="2"/><circle cx="12" cy="7.6" r="1.4" fill="#aaaaaa"/><path d="M12 11V18" stroke="#aaaaaa" stroke-width="2.2" stroke-linecap="round"/></svg>
<!-- bell -->
<svg style="left:849px;top:535px" width="24" height="24" viewBox="0 0 24 24"><path d="M12 2.2C8.300 2.600 6.300 5.300 6.300 9.300V15.300L3.300 18.600V19.400H20.700V18.600L17.700 15.300V9.300C17.700 5.300 15.700 2.600 12 2.200Z" fill="none" stroke="#aaaaaa" stroke-width="1.8" stroke-linejoin="round"/><path d="M10.2 21.300H13.800" stroke="#aaaaaa" stroke-width="1.8" stroke-linecap="round"/><circle cx="12" cy="1.6" r="1" fill="#aaaaaa"/></svg>
<!-- smile -->
<svg style="left:69px;top:822px" width="24" height="24" viewBox="0 0 24 24"><circle cx="12" cy="12" r="9.9" fill="none" stroke="#aaaaaa" stroke-width="2.1"/><circle cx="8.7" cy="9.3" r="1.5" fill="#aaaaaa"/><circle cx="15.5" cy="9.3" r="1.5" fill="#aaaaaa"/><path d="M6.700 13.600C8.200 17.800 15.800 17.800 17.300 13.600" fill="none" stroke="#aaaaaa" stroke-width="2" stroke-linecap="round"/></svg>
<!-- clip -->
<svg style="left:655px;top:822px" width="24" height="24" viewBox="-12 -12 24 24"><g transform="rotate(45)"><path d="M4.6 -3.5V5A4.6 4.6 0 0 1 -4.6 5V-6.2A3.1 3.1 0 0 1 1.600 -6.200V4A1.600 1.600 0 0 1 -1.600 4V-2.600" fill="none" stroke="#aaaaaa" stroke-width="2.2" stroke-linecap="round"/></g></svg>
<!-- mic -->
<svg style="left:717px;top:822px" width="24" height="24" viewBox="0 0 24 24"><rect x="7.300" y="1.800" width="9.400" height="13.200" rx="4.700" fill="#fff"/><path d="M4.300 10.600C4.300 15.400 7.600 18.600 12 18.600C16.400 18.600 19.700 15.400 19.700 10.600M12 18.600V22.300" fill="none" stroke="#fff" stroke-width="2.2" stroke-linecap="round"/></svg>
<!-- fish sticker -->
<svg style="left:0;top:0" width="1254" height="873" viewBox="0 0 1254 873">
<g transform="translate(305 390) scale(0.21195)" stroke-linejoin="round">
<circle cx="70" cy="75" r="19" fill="none" stroke="#3aa8cc" stroke-width="9"/>
<circle cx="130" cy="133" r="16" fill="none" stroke="#3aa8cc" stroke-width="9"/>
<!-- top fin -->
<path d="M440 95C520 60 610 80 665 125C700 150 705 190 680 205C640 175 580 150 520 150Z" fill="#d42a2a" stroke="#2a1a28" stroke-width="10"/>
<!-- right small fin -->
<path d="M690 270C720 290 735 330 725 375C705 360 690 330 688 300Z" fill="#c62424" stroke="#2a1a28" stroke-width="9"/>
<!-- bottom-left fin -->
<path d="M330 420C300 460 300 520 330 555C370 540 400 500 400 470Z" fill="#d42a2a" stroke="#2a1a28" stroke-width="10"/>
<!-- tail -->
<path d="M600 660C560 700 560 790 600 840C640 830 660 800 680 780C720 820 760 830 790 810C790 760 760 700 700 660Z" fill="#d42a2a" stroke="#2a1a28" stroke-width="10"/>
<path d="M640 720L620 800M690 720L730 790" stroke="#a01818" stroke-width="6" fill="none"/>
<!-- body blue -->
<path d="M185 170C230 100 330 70 450 80C570 90 670 170 705 300C730 420 710 560 660 690C620 700 560 660 520 600C450 520 350 430 250 360C180 300 160 220 185 170Z" fill="#2f9ae0" stroke="#22283a" stroke-width="11"/>
<path d="M470 110C560 120 640 190 670 300C690 400 680 520 650 620C630 560 620 480 600 400C570 300 530 200 470 110Z" fill="#1f7cc6" opacity=".55"/>
<path d="M230 150C280 110 360 95 430 105C380 120 320 140 260 180Z" fill="#6cc2f2" opacity=".7"/>
<!-- white back eye -->
<path d="M192 160C200 135 225 125 250 130L255 190L205 195Z" fill="#f2f2f2" stroke="#22283a" stroke-width="9"/>
<!-- cream jaw/belly -->
<path d="M130 235C150 205 200 200 250 215C300 240 350 280 400 290C450 305 480 330 520 380C580 450 640 560 660 690C620 705 570 670 530 620C470 540 420 480 330 420C260 405 200 390 160 340C135 305 125 265 130 235Z" fill="#eeeab8" stroke="#22283a" stroke-width="11"/>
<path d="M150 250C190 225 240 230 280 255C240 250 200 250 150 270Z" fill="#fffbe0" opacity=".8"/>
<path d="M160 340C200 385 270 405 330 420C420 480 470 540 530 620C560 660 610 700 660 690C600 690 560 650 520 600C460 520 400 470 330 440C260 425 190 400 160 340Z" fill="#c9c98a" opacity=".6"/>
<!-- teeth -->
<path d="M150 215L160 190L172 212M230 225L240 205L250 230M275 250L283 232L292 256" fill="#fff" stroke="#22283a" stroke-width="6"/>
<!-- red spot on belly -->
<path d="M550 565C580 580 610 620 608 655C590 655 565 625 552 600Z" fill="#d42a2a" stroke="#2a1a28" stroke-width="8"/>
<!-- pectoral fin -->
<path d="M480 330C490 250 520 160 555 130C600 150 630 200 625 250C600 290 540 320 480 330Z" fill="#d42a2a" stroke="#2a1a28" stroke-width="10"/>
<path d="M510 290C530 230 560 180 585 165" stroke="#a01818" stroke-width="6" fill="none"/>
<!-- eye -->
<circle cx="365" cy="147" r="88" fill="#f4f4f4" stroke="#22283a" stroke-width="12"/>
<path d="M285 175C310 230 420 235 448 165C430 200 320 210 285 175Z" fill="#b8c0cc"/>
<circle cx="365" cy="145" r="46" fill="#c8781e" stroke="#3a2010" stroke-width="6"/>
<circle cx="365" cy="145" r="30" fill="#1a1010"/>
<circle cx="380" cy="120" r="12" fill="#fff"/>
<circle cx="350" cy="160" r="6" fill="#fff"/>
</g>
</svg>
</body></html>
